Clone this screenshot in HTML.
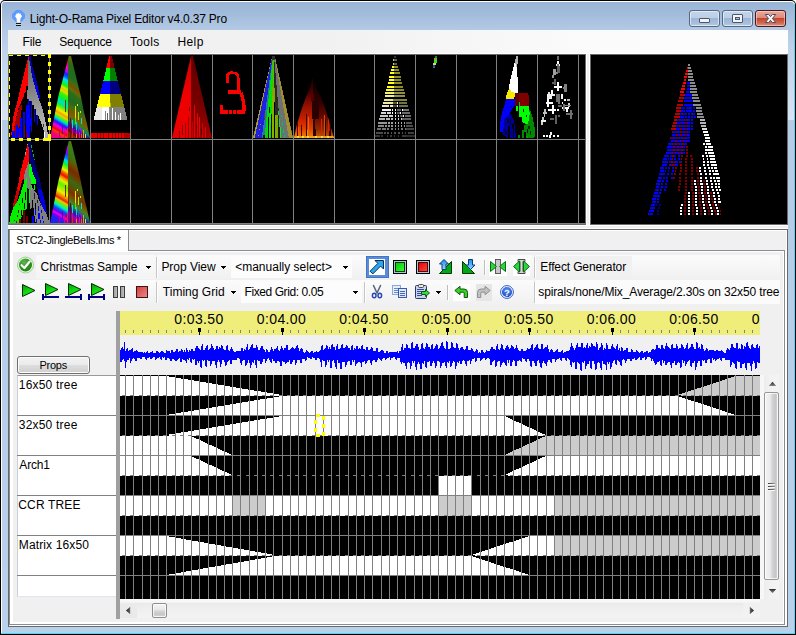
<!DOCTYPE html><html><head><meta charset="utf-8"><title>Light-O-Rama Pixel Editor v4.0.37 Pro</title><style>

*{box-sizing:border-box;margin:0;padding:0}
html,body{width:796px;height:635px;overflow:hidden;background:#fff}
body{font-family:"Liberation Sans",sans-serif;font-size:12px;color:#000;position:relative}
.a{position:absolute}
.t{position:absolute;white-space:nowrap;line-height:1}
#win{position:absolute;left:0;top:0;width:796px;height:635px;background:#000;border-radius:5px 5px 0 0;overflow:hidden}
#fr1{position:absolute;left:1px;top:1px;width:794px;height:633px;background:#fff;border-radius:4px 4px 0 0}
#fr2{position:absolute;left:2px;top:2px;width:792px;height:631px;border-radius:3px 3px 0 0;
 background:linear-gradient(#99b4d5 0px,#a3bcdb 12px,#b2c9e4 27px,#bfd3eb 50px,#d7e4f4 118px,#b5cce7 118.5px,#b9d1ea 100%)}

</style></head><body>
<div id="win"><div id="fr1"></div><div id="fr2"></div>
<div class="a" style="left:794px;top:4px;width:1px;height:630px;background:#4fd8f4"></div>
<div class="a" style="left:1px;top:633px;width:794px;height:1px;background:#4fd8f4"></div>
<div class="a" style="left:1px;top:8px;width:1px;height:625px;background:#fff"></div>
<div class="t" style="left:29.80px;top:13px;font-size:12px;letter-spacing:-0.189px;">Light-O-Rama Pixel Editor v4.0.37 Pro</div>
<svg class="a" style="left:11px;top:9px" width="16" height="18" viewBox="11 9 16 18">
<polygon points="16,10 21,10 25,14 25,18 21,22.3 16,22.3 12,18 12,14" fill="#5f9bff"/>
<path d="M18.5 12.4 L19.3 13.8 L20.8 13.6 L20.9 15 L22.2 16 L21 17.4 L20.3 19 L20.2 22.4 L16.8 22.4 L16.7 19 L16 17.4 L14.8 16 L16.1 15 L16.2 13.6 L17.7 13.8 Z" fill="#fff"/>
<rect x="16" y="23" width="5" height="1" fill="#1a1a1a"/><rect x="16" y="25" width="5" height="1" fill="#1a1a1a"/>
<rect x="16" y="24" width="5" height="1" fill="#c8d4e4"/>
</svg>
<div class="a" style="left:689px;top:10px;width:31px;height:17px;border:1px solid #566683;border-radius:3px;background:linear-gradient(#c3d4ea 0,#bccfe7 45%,#9cb6d6 50%,#a9c1de 85%,#b9cee7 100%);box-shadow:inset 0 0 0 1px rgba(235,243,252,.7)"></div>
<div class="a" style="left:699px;top:18px;width:11px;height:5px;border:1px solid #4a5670;border-radius:1px;background:#f4f4f4"></div>
<div class="a" style="left:722px;top:10px;width:31px;height:17px;border:1px solid #566683;border-radius:3px;background:linear-gradient(#c3d4ea 0,#bccfe7 45%,#9cb6d6 50%,#a9c1de 85%,#b9cee7 100%);box-shadow:inset 0 0 0 1px rgba(235,243,252,.7)"></div>
<div class="a" style="left:732px;top:14px;width:11px;height:9px;border:1px solid #4a5670;border-radius:1px;background:#f4f4f4"></div>
<div class="a" style="left:735px;top:17px;width:5px;height:3px;border:1px solid #4a5670;background:#a9c4e3"></div>
<div class="a" style="left:755px;top:10px;width:31px;height:17px;border:1px solid #4a1622;border-radius:3px;background:linear-gradient(#e9aa9c 0,#dd8a7a 45%,#c4442a 50%,#cf6a52 80%,#dc9580 100%);box-shadow:inset 0 0 0 1px rgba(255,220,210,.55)"></div>
<svg class="a" style="left:764px;top:13px" width="13" height="11" viewBox="0 0 13 11"><path d="M1.3 1.5 L4.6 1.5 L6.5 3.7 L8.4 1.5 L11.7 1.5 L8.4 5.5 L11.7 9.5 L8.4 9.5 L6.5 7.3 L4.6 9.5 L1.3 9.5 L4.6 5.5 Z" fill="#fbfbfb" stroke="#464e66" stroke-width="1" stroke-linejoin="round"/></svg>
<div class="a" style="left:8px;top:30px;width:780px;height:597px;background:#f0f0f0"></div>
<div class="a" style="left:8px;top:30px;width:780px;height:24px;background:linear-gradient(90deg,#f0f0f0 0,#f1f1f1 40%,#fbfbfb 75%,#fdfdfd 100%)"></div>
<div class="t" style="left:22.40px;top:36px;font-size:12px;letter-spacing:-0.067px;">File</div>
<div class="t" style="left:59.20px;top:36px;font-size:12px;letter-spacing:-0.186px;">Sequence</div>
<div class="t" style="left:130.10px;top:36px;font-size:12px;letter-spacing:0.275px;">Tools</div>
<div class="t" style="left:177.40px;top:36px;font-size:12px;letter-spacing:0.433px;">Help</div>
<div class="a" style="left:8px;top:53px;width:780px;height:1px;background:#fff"></div>
<div class="a" style="left:8px;top:225px;width:780px;height:1px;background:#fff"></div>
<div class="a" style="left:8px;top:228px;width:780px;height:1px;background:#fff"></div>
<div class="a" style="left:586px;top:53px;width:1px;height:173px;background:#fff"></div>
<div class="a" style="left:589px;top:53px;width:1px;height:173px;background:#fff"></div>
<div class="a" style="left:8px;top:54px;width:578px;height:171px;background:#000;border-left:1px solid #6a6a6a;border-top:1px solid #6a6a6a" id="thumbs"></div>
<svg class="a" style="left:8px;top:54px" width="578" height="172" viewBox="8 54 578 172" shape-rendering="crispEdges" id="thsvg">
<defs>
<linearGradient id="rb1" gradientUnits="userSpaceOnUse" x1="64.5" y1="56" x2="27.44" y2="117.76"><stop offset="0.000" stop-color="#c03000"/><stop offset="0.024" stop-color="#ff0000"/><stop offset="0.071" stop-color="#ff0060"/><stop offset="0.119" stop-color="#ff00e0"/><stop offset="0.167" stop-color="#c000ff"/><stop offset="0.202" stop-color="#2020ff"/><stop offset="0.238" stop-color="#0060ff"/><stop offset="0.274" stop-color="#00e0ff"/><stop offset="0.310" stop-color="#00f080"/><stop offset="0.345" stop-color="#20f000"/><stop offset="0.381" stop-color="#c0f000"/><stop offset="0.405" stop-color="#f0c000"/><stop offset="0.429" stop-color="#e0e000"/><stop offset="0.464" stop-color="#40f000"/><stop offset="0.524" stop-color="#00f040"/><stop offset="0.571" stop-color="#00e0c0"/><stop offset="0.607" stop-color="#00f060"/><stop offset="0.643" stop-color="#80f000"/><stop offset="0.679" stop-color="#f0f000"/><stop offset="0.714" stop-color="#f0a000"/><stop offset="0.738" stop-color="#f0d000"/><stop offset="0.762" stop-color="#60f000"/><stop offset="0.786" stop-color="#00f0a0"/><stop offset="0.810" stop-color="#00a0f0"/><stop offset="0.833" stop-color="#2020f0"/><stop offset="0.857" stop-color="#8000f0"/><stop offset="0.881" stop-color="#f000f0"/><stop offset="0.905" stop-color="#f00080"/><stop offset="0.929" stop-color="#f00000"/><stop offset="0.952" stop-color="#f04000"/><stop offset="1.000" stop-color="#f00080"/></linearGradient><linearGradient id="rb1d" gradientUnits="userSpaceOnUse" x1="75" y1="56" x2="33.17" y2="108.95"><stop offset="0.000" stop-color="#6a6000"/><stop offset="0.070" stop-color="#5a6a08"/><stop offset="0.140" stop-color="#2a6a18"/><stop offset="0.279" stop-color="#1e6e1e"/><stop offset="0.349" stop-color="#4a6a10"/><stop offset="0.384" stop-color="#7a5000"/><stop offset="0.419" stop-color="#6a6a08"/><stop offset="0.465" stop-color="#2a6e18"/><stop offset="0.570" stop-color="#206a20"/><stop offset="0.628" stop-color="#4a6a10"/><stop offset="0.698" stop-color="#7a5a00"/><stop offset="0.733" stop-color="#6a6a00"/><stop offset="0.767" stop-color="#308030"/><stop offset="0.802" stop-color="#208060"/><stop offset="0.826" stop-color="#203090"/><stop offset="0.849" stop-color="#301880"/><stop offset="0.872" stop-color="#600080"/><stop offset="0.895" stop-color="#800060"/><stop offset="0.919" stop-color="#800000"/><stop offset="0.953" stop-color="#803000"/><stop offset="1.000" stop-color="#803000"/></linearGradient><linearGradient id="rb2" gradientUnits="userSpaceOnUse" x1="64.5" y1="141" x2="27.00" y2="203.50"><stop offset="0.000" stop-color="#f000a0"/><stop offset="0.035" stop-color="#ff00ff"/><stop offset="0.094" stop-color="#a000ff"/><stop offset="0.141" stop-color="#3030ff"/><stop offset="0.188" stop-color="#0080ff"/><stop offset="0.224" stop-color="#00e0e0"/><stop offset="0.259" stop-color="#00f040"/><stop offset="0.306" stop-color="#80f000"/><stop offset="0.341" stop-color="#f0f000"/><stop offset="0.376" stop-color="#f06000"/><stop offset="0.412" stop-color="#f01000"/><stop offset="0.447" stop-color="#f0a000"/><stop offset="0.482" stop-color="#e0f000"/><stop offset="0.529" stop-color="#60f000"/><stop offset="0.576" stop-color="#a0f000"/><stop offset="0.624" stop-color="#f0f000"/><stop offset="0.671" stop-color="#f08000"/><stop offset="0.706" stop-color="#f02000"/><stop offset="0.729" stop-color="#f0c000"/><stop offset="0.765" stop-color="#60f020"/><stop offset="0.800" stop-color="#00f0c0"/><stop offset="0.835" stop-color="#0060f0"/><stop offset="0.871" stop-color="#6000f0"/><stop offset="0.906" stop-color="#f000f0"/><stop offset="0.929" stop-color="#8000f0"/><stop offset="0.965" stop-color="#2020f0"/><stop offset="1.000" stop-color="#2020f0"/></linearGradient><linearGradient id="rb2d" gradientUnits="userSpaceOnUse" x1="75" y1="141" x2="33.65" y2="193.34"><stop offset="0.000" stop-color="#6a5a10"/><stop offset="0.059" stop-color="#4a7a10"/><stop offset="0.129" stop-color="#3a8010"/><stop offset="0.247" stop-color="#407010"/><stop offset="0.306" stop-color="#6a5000"/><stop offset="0.376" stop-color="#7a2800"/><stop offset="0.435" stop-color="#6a4000"/><stop offset="0.506" stop-color="#3a6a10"/><stop offset="0.576" stop-color="#5a5008"/><stop offset="0.647" stop-color="#803000"/><stop offset="0.706" stop-color="#6a5a00"/><stop offset="0.753" stop-color="#508020"/><stop offset="0.800" stop-color="#208050"/><stop offset="0.835" stop-color="#203090"/><stop offset="0.871" stop-color="#4010a0"/><stop offset="0.906" stop-color="#a000a0"/><stop offset="0.953" stop-color="#8000a0"/><stop offset="1.000" stop-color="#8000a0"/></linearGradient><clipPath id="c2"><polygon points="68.8,56 71,56 80.8,96 83.5,110 87,124 90,138 50,138 52.9,124 55.6,110 58.4,96"/></clipPath><clipPath id="c22"><polygon points="68.8,141 71,141 80.8,181 83.5,195 87,209 90,223 50,223 52.9,209 55.6,195 58.4,181"/></clipPath>
<linearGradient id="fire" x1="0" y1="0" x2="0" y2="1"><stop offset="0" stop-color="#000000"/><stop offset=".3" stop-color="#180000"/><stop offset=".45" stop-color="#500000"/><stop offset=".6" stop-color="#901000"/><stop offset=".76" stop-color="#c42000"/><stop offset=".88" stop-color="#e04000"/><stop offset=".96" stop-color="#f07000"/><stop offset="1" stop-color="#f0b020"/></linearGradient>
<linearGradient id="fired" x1="0" y1="0" x2="0" y2="1"><stop offset="0" stop-color="#000000"/><stop offset=".35" stop-color="#100000"/><stop offset=".55" stop-color="#300000"/><stop offset=".72" stop-color="#600800"/><stop offset=".88" stop-color="#902800"/><stop offset=".96" stop-color="#b05000"/><stop offset="1" stop-color="#c08010"/></linearGradient>
<linearGradient id="redl" x1="0" y1="0" x2="0" y2="1"><stop offset="0" stop-color="#d00000"/><stop offset=".5" stop-color="#f00000"/><stop offset="1" stop-color="#e80000"/></linearGradient>
<linearGradient id="redr" x1="0" y1="0" x2="0" y2="1"><stop offset="0" stop-color="#600000"/><stop offset=".6" stop-color="#780000"/><stop offset="1" stop-color="#a00000"/></linearGradient>
<linearGradient id="gry" gradientUnits="userSpaceOnUse" x1="28" y1="60" x2="46" y2="120"><stop offset="0" stop-color="#686868"/><stop offset=".5" stop-color="#848484"/><stop offset="1" stop-color="#b0b0b0"/></linearGradient>
<clipPath id="c5"><polygon points="191.0,56 193.0,56 212,138 172,138"/></clipPath>
<clipPath id="c7"><polygon points="272,56 275,56 284,96 293.2,138 252.8,138 262.3,96"/></clipPath>
<clipPath id="c8"><polygon points="312,79 314,79 316,88 320,95 325,108 330,124 334,138 294,138 296.5,126 301,111 306,97 310,88"/></clipPath>
</defs>
<polygon points="28.2,56.0 31.0,56.0 31.0,61.0 35.0,76.0 37.8,86.0 40.0,97.0 40.0,99.0 38.0,99.0 34.6,86.0 31.9,76.0 30.0,62.0 28.2,60.0" fill="#0000b8" /><polygon points="34.6,86.0 37.8,86.0 40.0,97.0 40.0,99.0 38.0,99.0" fill="#0000f0" /><polygon points="28.1,60.0 30.0,62.0 31.9,76.0 34.7,86.0 38.1,97.0 42.0,107.0 44.7,118.0 46.5,126.0 48.6,137.6 45.0,137.6 43.0,128.0 40.0,120.0 38.5,116.0 36.4,115.0 36.4,109.0 33.6,109.0 33.6,105.0 31.9,105.0 31.9,101.0 29.1,101.0 29.1,99.0 27.0,99.0 27.0,90.0 28.1,90.0" fill="url(#gry)" /><rect x="44" y="132" width="1" height="6" fill="#ffffff"/><rect x="43" y="124" width="1" height="3" fill="#303030"/><polygon points="28.2,57.0 28.9,57.0 28.9,60.0 28.1,61.0 28.1,86.0 26.0,86.0 26.0,92.0 24.8,92.0 23.6,97.0 18.9,107.0 16.1,118.0 14.2,128.0 13.3,135.0 11.1,135.0 12.0,128.0 13.1,118.0 15.9,107.0 18.4,97.0 21.1,86.0 23.6,76.0 26.1,66.0 27.6,60.0" fill="#ff0000" /><polygon points="21.6,105.0 21.6,108.0 21.1,118.0 20.2,126.0 16.1,135.0 11.9,137.6 13.3,135.0 14.4,128.0 16.1,118.0 19.3,107.0" fill="#a00000" /><rect x="28" y="99" width="1" height="6" fill="#0000ff"/><rect x="26" y="105" width="4" height="32.6" fill="#0000ff"/><rect x="31" y="101" width="1.4" height="31" fill="#0000ff"/><rect x="34" y="109" width="1" height="13" fill="#0000ff"/><rect x="36.5" y="115" width="1.2" height="10" fill="#0000ff"/><rect x="23" y="112" width="2" height="25.6" fill="#0000ff"/><rect x="20" y="118" width="2.4" height="19.6" fill="#0000ff"/><rect x="16" y="125" width="1.8" height="12.6" fill="#0000ff"/><rect x="12" y="131" width="6" height="6.6" fill="#0000ff"/><rect x="18" y="128" width="2" height="9.6" fill="#0000ff"/><rect x="30" y="118" width="1" height="8" fill="#0000ff"/><rect x="23.6" y="125" width="1.2" height="12.6" fill="#800000"/><rect x="26.8" y="132" width="1.2" height="5.6" fill="#800000"/><rect x="14.5" y="130" width="1" height="6" fill="#800000"/><rect x="21.6" y="120" width="0.8" height="8" fill="#800000"/><rect x="19" y="133" width="1" height="4.6" fill="#800000"/><rect x="25" y="118" width="1" height="12" fill="#000000"/><rect x="22.5" y="126" width="0.8" height="8" fill="#000000"/><rect x="29.8" y="110" width="0.8" height="8" fill="#000000"/>
<g clip-path="url(#c2)"><rect x="50" y="55" width="18.4" height="84" fill="url(#rb1)"/><rect x="68.4" y="55" width="22" height="84" fill="url(#rb1d)"/><rect x="65" y="100" width="1.2" height="12" fill="#703000"/><rect x="68" y="110" width="1.2" height="10" fill="#802000"/><rect x="70" y="118" width="1.2" height="20" fill="#601010"/><rect x="72" y="120" width="1.2" height="18" fill="#00e0f0"/><rect x="72" y="128" width="1.2" height="10" fill="#c000e0"/><rect x="72" y="133" width="1.2" height="5" fill="#f02000"/><rect x="75" y="106" width="1.2" height="12" fill="#f0e000"/><rect x="75" y="118" width="1.2" height="6" fill="#40f000"/><rect x="76" y="122" width="1.2" height="8" fill="#00d0f0"/><rect x="76" y="130" width="1.2" height="4" fill="#e000e0"/><rect x="76" y="134" width="1.2" height="4" fill="#f08000"/><rect x="78" y="112" width="1.2" height="8" fill="#a0f000"/><rect x="78" y="126" width="1.2" height="6" fill="#4040f0"/><rect x="79" y="132" width="1.2" height="6" fill="#f000c0"/><rect x="81" y="118" width="1.2" height="6" fill="#00e0e0"/><rect x="81" y="128" width="1.2" height="6" fill="#c000f0"/><rect x="81" y="134" width="1.2" height="4" fill="#f06000"/><rect x="83" y="130" width="1.2" height="8" fill="#f0a000"/><rect x="85" y="134" width="1.2" height="4" fill="#f0e000"/><rect x="62" y="126" width="1.2" height="8" fill="#6000a0"/><rect x="64" y="130" width="1.2" height="8" fill="#f00060"/><rect x="67" y="128" width="1.2" height="10" fill="#f02020"/><rect x="59" y="132" width="1.2" height="6" fill="#c00080"/><rect x="77" y="104" width="1" height="1.5" fill="#f0e000"/><rect x="80" y="111" width="1" height="1.5" fill="#f0e000"/></g>
<polygon points="109.3,56.0 109.5,56.0 109.5,67.5 106.5,67.5" fill="#ff0000" /><polygon points="109.5,56.0 111.7,56.0 114.5,67.5 109.5,67.5" fill="#800000" /><polygon points="106.5,67.5 109.5,67.5 109.5,80.5 103.3,80.5" fill="#00ff00" /><polygon points="109.5,67.5 114.5,67.5 117.7,80.5 109.5,80.5" fill="#008000" /><polygon points="103.3,80.5 109.5,80.5 109.5,93.5 100.1,93.5" fill="#0000ff" /><polygon points="109.5,80.5 117.7,80.5 120.9,93.5 109.5,93.5" fill="#000080" /><polygon points="100.1,93.5 109.5,93.5 109.5,106.5 96.9,106.5" fill="#ffff00" /><polygon points="109.5,93.5 120.9,93.5 124.1,106.5 109.5,106.5" fill="#808000" /><polygon points="96.9,106.5 109.5,106.5 109.5,120.0 93.6,120.0" fill="#ffffff" /><polygon points="109.5,106.5 124.1,106.5 127.4,120.0 109.5,120.0" fill="#808080" /><rect x="104.5" y="111" width="1" height="9" fill="#808080"/><rect x="106.5" y="113" width="1" height="7" fill="#606060"/><rect x="108.5" y="107" width="1" height="13" fill="#909090"/><rect x="111.5" y="108" width="1" height="12" fill="#ffffff"/><rect x="114.5" y="112" width="1" height="8" fill="#ffffff"/><rect x="117.5" y="115" width="1" height="5" fill="#e0e0e0"/><rect x="119.5" y="113" width="1" height="7" fill="#ffffff"/><rect x="109.5" y="103" width="1" height="4" fill="#c0c000"/><polygon points="96.9,106.5 102.5,106.5 101.5,120.0 93.6,120.0" fill="#e8e8e8" /><rect x="91" y="133" width="40" height="5" fill="#e80000"/><rect x="97" y="133" width="1" height="5" fill="#900000"/><rect x="100" y="133" width="1" height="5" fill="#900000"/><rect x="103" y="133" width="1" height="5" fill="#900000"/><rect x="108" y="133" width="1" height="5" fill="#900000"/><rect x="112" y="133" width="1" height="5" fill="#900000"/><rect x="115" y="133" width="1" height="5" fill="#900000"/><rect x="118" y="133" width="1" height="5" fill="#900000"/><rect x="121" y="133" width="1" height="5" fill="#900000"/><rect x="124" y="133" width="1" height="5" fill="#900000"/><rect x="124" y="133" width="7" height="5" fill="#b00000"/>
<g clip-path="url(#c5)"><rect x="172" y="55" width="19" height="84" fill="url(#redl)"/><rect x="191" y="55" width="21" height="84" fill="url(#redr)"/><rect x="194" y="105" width="1" height="33" fill="#e80000"/><rect x="197" y="113" width="1" height="25" fill="#e00000"/><rect x="199" y="117" width="1" height="20" fill="#f00000"/><rect x="202" y="123" width="1" height="15" fill="#d00000"/><rect x="205" y="127" width="1" height="11" fill="#e00000"/><rect x="192" y="121" width="1" height="17" fill="#c00000"/><rect x="188" y="117" width="1" height="21" fill="#900000"/><rect x="185" y="123" width="1" height="15" fill="#a00000"/><rect x="182" y="125" width="1" height="10" fill="#800000"/><rect x="179" y="131" width="1" height="7" fill="#900000"/><rect x="196" y="125" width="1" height="8" fill="#600000"/><rect x="201" y="129" width="1" height="6" fill="#500000"/><rect x="189" y="107" width="1" height="4" fill="#800000"/></g>
<g transform="translate(0,0)" fill="none" stroke="#ff0000"><path d="M227.2 82.5 V77 Q227.4 72.6 232 72.6 Q238.4 72.6 238.4 79 V90" stroke-width="2.6"/><path d="M228 91.7 H241" stroke-width="3.6"/><path d="M241 93 Q243 98 243.6 103 Q244.3 108 244.2 111" stroke-width="3.4"/><path d="M221.2 104.5 V110" stroke-width="3.2"/><path d="M219.6 112 H245.4" stroke-width="4.6" stroke-dasharray="8.5 1 3 1 3 1 30"/></g>
<g clip-path="url(#c7)"><polygon points="272.2,56.0 272.3,56.0 254.6,138.0 252.8,138.0" fill="#b0a020" /><polygon points="272.3,56.0 272.8,56.0 261.7,138.0 254.6,138.0" fill="#2020e0" /><polygon points="272.8,56.0 273.0,56.0 264.5,138.0 261.7,138.0" fill="#2080a0" /><polygon points="273.0,56.0 273.4,56.0 271.0,138.0 264.5,138.0" fill="#00e000" /><polygon points="273.4,56.0 273.7,56.0 275.8,138.0 271.0,138.0" fill="#80a800" /><polygon points="273.7,56.0 274.0,56.0 281.1,138.0 275.8,138.0" fill="#2a2a2a" /><polygon points="274.0,56.0 274.5,56.0 288.8,138.0 281.1,138.0" fill="#707070" /><polygon points="274.5,56.0 274.8,56.0 293.2,138.0 288.8,138.0" fill="#a09030" /><rect x="269.018" y="107.088" width="1.0395" height="5.54401" fill="#000"/><rect x="271.097" y="114.018" width="0.831601" height="24.255" fill="#000"/><rect x="267.632" y="116.79" width="1.2474" height="21.483" fill="#000"/><rect x="270.058" y="112.632" width="1.0395" height="12.474" fill="#00ff00"/><rect x="268.879" y="125.106" width="1.1781" height="13.167" fill="#00ff00"/><rect x="273.869" y="101.544" width="1.386" height="22.176" fill="#000"/><rect x="274.216" y="123.72" width="1.7325" height="14.553" fill="#000"/><rect x="275.255" y="115.404" width="2.4255" height="22.869" fill="#80a800"/><rect x="272.137" y="96" width="1.7325" height="42.273" fill="#88b000"/><rect x="278.027" y="110.9" width="1.0395" height="3.8115" fill="#00e040"/><rect x="279.067" y="118.869" width="1.0395" height="8.31601" fill="#00e040"/><rect x="280.106" y="127.185" width="1.386" height="11.088" fill="#00f020"/><rect x="278.374" y="127.185" width="1.7325" height="11.088" fill="#181818"/><rect x="280.799" y="114.711" width="1.0395" height="2.772" fill="#00c060"/><rect x="281.839" y="121.641" width="1.0395" height="4.851" fill="#00c060"/><rect x="282.878" y="128.571" width="1.2474" height="4.851" fill="#00c060"/><rect x="284.125" y="134.808" width="0.970201" height="3.465" fill="#00c060"/><rect x="283.918" y="119.909" width="1.0395" height="1.7325" fill="#2090c0"/><rect x="284.957" y="126.839" width="1.0395" height="1.386" fill="#2090c0"/><rect x="285.997" y="132.036" width="1.0395" height="2.4255" fill="#2090c0"/><rect x="263.128" y="134.808" width="1.7325" height="3.465" fill="#301010"/><rect x="265.207" y="128.571" width="1.7325" height="9.70201" fill="#20c020"/><rect x="265.9" y="116.79" width="1.386" height="11.781" fill="#20c020"/><rect x="263.821" y="112.632" width="1.386" height="6.93001" fill="#504040"/><rect x="259.663" y="123.72" width="1.0395" height="1.0395" fill="#b09040"/><rect x="258.97" y="128.918" width="1.0395" height="1.0395" fill="#b09040"/><rect x="257.93" y="134.808" width="1.0395" height="1.386" fill="#b09040"/><rect x="272" y="56" width="3" height="3.5" fill="#303030"/></g>
<g clip-path="url(#c8)"><rect x="294" y="55" width="19" height="84" fill="url(#fire)"/><rect x="313" y="55" width="21" height="84" fill="url(#fired)"/><rect x="324" y="116" width="1" height="23" fill="#f04000"/><rect x="325" y="119" width="1" height="20" fill="#200000"/><rect x="308" y="128" width="1" height="11" fill="#f04000"/><rect x="328" y="118" width="1" height="21" fill="#e02000"/><rect x="307" y="130" width="1" height="9" fill="#f09000"/><rect x="315" y="129" width="1" height="10" fill="#300000"/><rect x="330" y="113" width="1" height="26" fill="#300000"/><rect x="321" y="119" width="1" height="20" fill="#e02000"/><rect x="306" y="114" width="1" height="25" fill="#300000"/><rect x="329" y="131" width="1" height="8" fill="#300000"/><rect x="298" y="127" width="1" height="12" fill="#f06000"/><rect x="297" y="119" width="1" height="20" fill="#500000"/><rect x="324" y="115" width="1" height="24" fill="#f04000"/><rect x="308" y="117" width="1" height="22" fill="#f06000"/><rect x="314" y="118" width="1" height="21" fill="#300000"/><rect x="301" y="119" width="1" height="20" fill="#e02000"/><rect x="313" y="120" width="1" height="19" fill="#200000"/><rect x="301" y="125" width="1" height="14" fill="#500000"/><rect x="312" y="100" width="7" height="19" fill="#2a0000"/><rect x="311" y="95" width="3" height="6" fill="#500000"/><rect x="294" y="136" width="40" height="2" fill="#f0a020"/><rect x="297" y="136" width="2" height="2" fill="#f0e040"/><rect x="302" y="136" width="2" height="2" fill="#f0e040"/><rect x="307" y="136" width="2" height="2" fill="#f0e040"/><rect x="315" y="136" width="2" height="2" fill="#f0e040"/><rect x="321" y="136" width="2" height="2" fill="#f0e040"/><rect x="327" y="136" width="2" height="2" fill="#f0e040"/></g>
<rect x="394" y="56" width="2" height="2" fill="#303050"/><rect x="393" y="59" width="1" height="2" fill="#c8c840"/><rect x="394" y="59" width="3" height="2" fill="#606040"/><rect x="393" y="63" width="1" height="2" fill="#c8c840"/><rect x="394" y="63" width="3" height="2" fill="#606040"/><rect x="392" y="66" width="2" height="2" fill="#ffff20"/><rect x="394" y="66" width="4" height="2" fill="#8c8c20"/><rect x="391" y="69" width="3" height="2" fill="#ffff20"/><rect x="394" y="69" width="5" height="2" fill="#8c8c20"/><rect x="390" y="72" width="4" height="2" fill="#ffff20"/><rect x="394" y="72" width="6" height="2" fill="#8c8c20"/><rect x="389" y="76" width="5" height="2" fill="#ffff20"/><rect x="394" y="76" width="7" height="2" fill="#8c8c20"/><rect x="389" y="79" width="5" height="2" fill="#ffff20"/><rect x="394" y="79" width="7" height="2" fill="#8c8c20"/><rect x="388" y="82" width="6" height="2" fill="#ffff20"/><rect x="394" y="82" width="8" height="2" fill="#8c8c20"/><rect x="387" y="86" width="7" height="2" fill="#ffff20"/><rect x="394" y="86" width="9" height="2" fill="#8c8c20"/><rect x="386" y="89" width="8" height="2" fill="#ffff20"/><rect x="394" y="89" width="10" height="2" fill="#8c8c20"/><rect x="385" y="92" width="9" height="2" fill="#f0f080"/><rect x="394" y="92" width="11" height="2" fill="#909048"/><rect x="385" y="95" width="9" height="2" fill="#f0f080"/><rect x="394" y="95" width="11" height="2" fill="#909048"/><rect x="384" y="99" width="9" height="2" fill="#e4e490"/><rect x="393" y="99" width="14" height="2" fill="#84843c"/><rect x="383" y="102" width="10" height="2" fill="#ececa0"/><rect x="393" y="102" width="4" height="2" fill="#585838"/><rect x="397" y="102" width="1" height="2" fill="#ffffd0"/><rect x="399" y="102" width="8" height="2" fill="#747440"/><rect x="382" y="105" width="7" height="2" fill="#e4e4c4"/><rect x="390" y="105" width="3" height="2" fill="#f0f0a0"/><rect x="393" y="105" width="4" height="2" fill="#484838"/><rect x="397" y="105" width="1" height="2" fill="#ffffe0"/><rect x="399" y="105" width="9" height="2" fill="#6c6c50"/><rect x="382" y="109" width="9" height="2" fill="#f4f4f4"/><rect x="392" y="109" width="1" height="2" fill="#ffffff"/><rect x="395" y="109" width="1" height="2" fill="#ffffff"/><rect x="397" y="109" width="4" height="2" fill="#606060"/><rect x="402" y="109" width="1" height="2" fill="#ffffff"/><rect x="403" y="109" width="6" height="2" fill="#747474"/><rect x="381" y="112" width="5" height="2" fill="#d4d4d4"/><rect x="387" y="112" width="4" height="2" fill="#d8d8d8"/><rect x="392" y="112" width="1" height="2" fill="#ffffff"/><rect x="395" y="112" width="1" height="2" fill="#f0f0f0"/><rect x="397" y="112" width="3" height="2" fill="#585858"/><rect x="400" y="112" width="1" height="2" fill="#ffffff"/><rect x="402" y="112" width="8" height="2" fill="#6c6c6c"/><rect x="380" y="115" width="8" height="2" fill="#c8c8c8"/><rect x="389" y="115" width="4" height="2" fill="#d0d0d0"/><rect x="395" y="115" width="1" height="2" fill="#e0e0e0"/><rect x="398" y="115" width="1" height="2" fill="#e0e0e0"/><rect x="400" y="115" width="3" height="2" fill="#585858"/><rect x="403" y="115" width="1" height="2" fill="#f0f0f0"/><rect x="405" y="115" width="6" height="2" fill="#686868"/><rect x="379" y="118" width="6" height="2" fill="#b4b4b4"/><rect x="386" y="118" width="4" height="2" fill="#b8b8b8"/><rect x="391" y="118" width="2" height="2" fill="#c0c0c0"/><rect x="395" y="118" width="1" height="2" fill="#d0d0d0"/><rect x="398" y="118" width="1" height="2" fill="#d0d0d0"/><rect x="401" y="118" width="1" height="2" fill="#d0d0d0"/><rect x="402" y="118" width="9" height="2" fill="#606060"/><rect x="378" y="122" width="9" height="2" fill="#949494"/><rect x="388" y="122" width="2" height="2" fill="#a0a0a0"/><rect x="391" y="122" width="2" height="2" fill="#a0a0a0"/><rect x="395" y="122" width="1" height="2" fill="#b0b0b0"/><rect x="398" y="122" width="1" height="2" fill="#b0b0b0"/><rect x="401" y="122" width="1" height="2" fill="#b0b0b0"/><rect x="404" y="122" width="1" height="2" fill="#a0a0a0"/><rect x="406" y="122" width="6" height="2" fill="#545454"/><rect x="378" y="125" width="6" height="2" fill="#848484"/><rect x="385" y="125" width="2" height="2" fill="#8c8c8c"/><rect x="388" y="125" width="2" height="2" fill="#909090"/><rect x="391" y="125" width="2" height="2" fill="#909090"/><rect x="395" y="125" width="1" height="2" fill="#989898"/><rect x="398" y="125" width="1" height="2" fill="#989898"/><rect x="401" y="125" width="1" height="2" fill="#989898"/><rect x="404" y="125" width="1" height="2" fill="#909090"/><rect x="406" y="125" width="7" height="2" fill="#4c4c4c"/><rect x="377" y="128" width="4" height="2" fill="#707070"/><rect x="382" y="128" width="4" height="2" fill="#747474"/><rect x="387" y="128" width="2" height="2" fill="#787878"/><rect x="391" y="128" width="2" height="2" fill="#7c7c7c"/><rect x="395" y="128" width="1" height="2" fill="#808080"/><rect x="398" y="128" width="1" height="2" fill="#808080"/><rect x="401" y="128" width="2" height="2" fill="#787878"/><rect x="405" y="128" width="1" height="2" fill="#707070"/><rect x="406" y="128" width="8" height="2" fill="#444444"/><rect x="376" y="132" width="7" height="2" fill="#4c4c4c"/><rect x="384" y="132" width="2" height="2" fill="#505050"/><rect x="387" y="132" width="2" height="2" fill="#505050"/><rect x="391" y="132" width="1" height="2" fill="#545454"/><rect x="394" y="132" width="2" height="2" fill="#545454"/><rect x="398" y="132" width="2" height="2" fill="#505050"/><rect x="402" y="132" width="1" height="2" fill="#505050"/><rect x="405" y="132" width="1" height="2" fill="#4c4c4c"/><rect x="408" y="132" width="1" height="2" fill="#484848"/><rect x="409" y="132" width="5" height="2" fill="#3c3c3c"/><rect x="375" y="135" width="5" height="2" fill="#343434"/><rect x="381" y="135" width="2" height="2" fill="#303030"/><rect x="387" y="135" width="1" height="2" fill="#383838"/><rect x="390" y="135" width="2" height="2" fill="#383838"/><rect x="394" y="135" width="1" height="2" fill="#383838"/><rect x="398" y="135" width="1" height="2" fill="#343434"/><rect x="402" y="135" width="4" height="2" fill="#383838"/><rect x="406" y="135" width="9" height="2" fill="#2c2c2c"/>
<rect x="435" y="56" width="2" height="2" fill="#208020"/><rect x="434" y="58" width="3" height="2" fill="#a0a020"/><rect x="434" y="60" width="3" height="3" fill="#30e030"/><rect x="433" y="63" width="3" height="2" fill="#e0e020"/><rect x="433" y="65" width="2" height="2" fill="#2040e0"/><rect x="433" y="67" width="2" height="1" fill="#2080a0"/>
<polygon points="516.1,56.1 517.9,56.1 517.9,63.0 516.5,67.9 517.2,74.8 518.0,81.7 518.0,92.8 515.1,92.8 510.9,91.8 508.9,88.7 509.9,81.7 511.6,74.8 513.4,67.9 515.1,60.9" fill="#ffffff" /><polygon points="516.1,56.1 517.9,56.1 517.9,63.0 516.6,67.2 515.5,64.4 515.1,60.9" fill="#b0b0b0" /><polygon points="509.6,88.7 511.3,91.8 515.1,92.8 515.1,96.0 513.7,98.8 508.9,99.5 506.1,99.5 506.1,96.0 507.1,92.8" fill="#f8e800" /><polygon points="515.1,92.9 527.2,92.9 529.0,96.0 529.0,105.7 515.1,105.7" fill="#800000" /><rect x="515.097" y="92.8815" width="3.465" height="12.8205" fill="#600000"/><polygon points="506.1,99.5 515.1,98.8 515.1,105.7 513.7,106.4 511.6,109.9 509.9,113.3 507.5,116.8 504.0,118.9 504.0,132.0 500.2,132.0 500.2,122.3 501.2,116.8 501.9,113.3 503.0,109.9 504.0,106.4 505.0,102.9" fill="#0000f8" /><polygon points="509.9,113.3 511.6,115.4 513.7,120.3 515.1,127.2 515.8,137.6 506.8,137.6 501.9,133.4 504.0,132.0 504.0,118.9 507.5,116.8" fill="#000098" /><polygon points="518.6,105.7 529.0,105.7 529.7,113.3 529.0,118.9 527.6,123.7 525.5,123.7 521.7,121.6 521.7,116.8 518.9,116.8" fill="#00ff00" /><rect x="515.79" y="106.049" width="2.079" height="4.851" fill="#00ff00"/><rect x="518.909" y="101.891" width="1.0395" height="3.8115" fill="#00d000"/><polygon points="529.0,109.9 530.3,109.9 532.4,116.8 533.8,123.7 535.5,130.7 535.2,136.2 533.8,137.6 526.2,137.6 524.1,130.7 524.1,125.1 527.6,123.7 529.0,118.9 529.7,113.3" fill="#008800" /><rect x="522.027" y="129.957" width="2.079" height="7.62301" fill="#008800"/><rect x="518.216" y="134.808" width="1.7325" height="2.772" fill="#008800"/><rect x="525.492" y="135.501" width="2.079" height="2.079" fill="#00a000"/><rect x="522.72" y="109.167" width="1.386" height="2.772" fill="#002000"/><rect x="525.839" y="114.711" width="1.386" height="2.079" fill="#002000"/><rect x="528.264" y="126.492" width="1.386" height="2.079" fill="#002000"/><rect x="529.65" y="131.343" width="1.386" height="3.465" fill="#002000"/><rect x="526.532" y="128.571" width="1.386" height="4.851" fill="#000000"/><rect x="524.799" y="132.036" width="1.386" height="5.54401" fill="#000000"/><rect x="510.593" y="105.702" width="1.386" height="1.386" fill="#000040"/><rect x="507.128" y="118.869" width="1.386" height="4.158" fill="#000030"/><rect x="509.9" y="119.562" width="1.386" height="5.54401" fill="#000020"/><rect x="505.049" y="123.72" width="1.0395" height="1.386" fill="#000030"/><rect x="503.316" y="128.571" width="1.386" height="2.079" fill="#000030"/><rect x="508.167" y="126.492" width="1.7325" height="11.088" fill="#000010"/><rect x="512.325" y="123.72" width="1.386" height="4.851" fill="#000010"/><rect x="505.395" y="130.65" width="1.386" height="4.158" fill="#000020"/><rect x="513.365" y="129.264" width="1.0395" height="8.31601" fill="#000020"/>
<rect x="557.1" y="56.1" width="1.7" height="3.5" fill="#707070"/><rect x="557.1" y="60.9" width="1.7" height="3.1" fill="#ffffff"/><rect x="556.1" y="64" width="3.8" height="2.1" fill="#e8e8e8"/><rect x="557.1" y="64.4" width="1.7" height="1.4" fill="#707070"/><rect x="557.1" y="66.1" width="2.8" height="6.6" fill="#606060"/><rect x="553.3" y="68.9" width="2.8" height="5.9" fill="#a0a0a0"/><rect x="556.1" y="71.7" width="2.1" height="2.1" fill="#808080"/><rect x="551.9" y="74.8" width="2.1" height="3.1" fill="#909090"/><rect x="553.7" y="79.3" width="2.4" height="5.9" fill="#606060"/><rect x="551.9" y="81.7" width="4.2" height="2.1" fill="#606060"/><rect x="556.8" y="82.1" width="2.4" height="8.7" fill="#ffffff"/><rect x="553.7" y="85.9" width="8.3" height="2.4" fill="#ffffff"/><rect x="564.4" y="84.1" width="2.1" height="7.6" fill="#808080"/><rect x="563" y="86.9" width="3.5" height="1.7" fill="#808080"/><rect x="550.9" y="90" width="2.1" height="6.2" fill="#ffffff"/><rect x="547.4" y="93.8" width="7.3" height="2.4" fill="#f0f0f0"/><rect x="548.1" y="92.1" width="1.7" height="2.1" fill="#e0e0e0"/><rect x="556.1" y="94.2" width="3.8" height="2.1" fill="#707070"/><rect x="560.9" y="95.2" width="1.7" height="1" fill="#f0f0f0"/><rect x="547.4" y="93.9" width="4.9" height="4.9" fill="#f0f0f0"/><rect x="556.1" y="93.9" width="3.8" height="7.6" fill="#707070"/><rect x="558.2" y="101.5" width="2.1" height="2.1" fill="#707070"/><rect x="560.9" y="93.9" width="1.7" height="4.9" fill="#f0f0f0"/><rect x="563.7" y="99.1" width="2.1" height="2.1" fill="#ffffff"/><rect x="566.8" y="99.1" width="3.1" height="2.1" fill="#c0c0c0"/><rect x="561.6" y="101.5" width="1.7" height="2.1" fill="#ffffff"/><rect x="567.9" y="102.9" width="2.1" height="4.2" fill="#d0d0d0"/><rect x="562" y="107.1" width="1.7" height="2.1" fill="#ffffff"/><rect x="565.1" y="107.1" width="3.5" height="2.1" fill="#ffffff"/><rect x="566.1" y="109.2" width="1.7" height="2.8" fill="#ffffff"/><rect x="563" y="103.6" width="2.1" height="7.3" fill="#707070"/><rect x="563.7" y="105" width="6.9" height="1.4" fill="#808080"/><rect x="547.4" y="98.8" width="1.7" height="8" fill="#ffffff"/><rect x="546" y="101.9" width="6.9" height="2.1" fill="#ffffff"/><rect x="551.9" y="105.4" width="2.2" height="8.3" fill="#ffffff"/><rect x="548.1" y="108.8" width="8" height="2.1" fill="#ffffff"/><rect x="557.1" y="109.2" width="1.7" height="1.7" fill="#ffffff"/><rect x="558.2" y="105" width="3.5" height="1.7" fill="#606060"/><rect x="570" y="110.2" width="2.1" height="8.7" fill="#707070"/><rect x="566.1" y="113" width="6.6" height="2.1" fill="#707070"/><rect x="544" y="109.2" width="1.7" height="3.5" fill="#c0c0c0"/><rect x="543.3" y="112.3" width="3.5" height="1.7" fill="#c0c0c0"/><rect x="544" y="114" width="1" height="2.8" fill="#c0c0c0"/><rect x="542.2" y="116.8" width="1.7" height="3.8" fill="#c8c8c8"/><rect x="541.2" y="120.3" width="4.5" height="1.7" fill="#f0f0f0"/><rect x="541.2" y="122" width="1.7" height="2.8" fill="#d0d0d0"/><rect x="550.2" y="118.2" width="3.5" height="1.7" fill="#606060"/><rect x="555.1" y="115.1" width="1.7" height="8.7" fill="#606060"/><rect x="558.2" y="115.4" width="1.7" height="1.4" fill="#606060"/><rect x="542.9" y="134.8" width="2.1" height="2.1" fill="#ffffff"/><rect x="546" y="134.8" width="1.7" height="2.1" fill="#ffffff"/><rect x="549.2" y="134.8" width="1.7" height="3.1" fill="#ffffff"/><rect x="550.2" y="132" width="1.7" height="2.8" fill="#f0f0f0"/><rect x="553.3" y="134.8" width="1.7" height="2.1" fill="#ffffff"/><rect x="557.1" y="134.8" width="1.7" height="2.1" fill="#ffffff"/>
<polygon points="28.1,141.1 30.9,141.1 32.3,151.9 35.7,165.7 39.9,179.6 39.9,180.0 42.0,190.4 44.7,200.8 46.1,207.7 46.8,212.6 44.0,212.6 42.7,207.7 39.9,200.8 37.8,190.4 35.7,180.0 35.0,179.6 30.2,165.7 28.8,151.9" fill="#000078" /><polygon points="37.8,188.3 42.0,190.4 44.7,200.8 46.1,207.7 46.8,212.6 44.0,212.6 42.7,207.7 39.9,200.8" fill="#0000e0" /><polygon points="27.1,144.2 28.1,144.2 29.1,151.9 29.1,161.6 28.1,165.7 25.3,172.7 23.2,179.6 22.2,180.0 19.8,190.4 17.0,200.8 14.9,208.4 13.2,208.4 13.2,204.3 14.9,197.3 17.0,189.0 19.1,180.0 19.1,179.6 20.1,172.7 22.2,165.7 23.9,158.8 26.0,151.9" fill="#ff0000" /><polygon points="17.0,189.0 19.8,190.4 17.0,200.8 14.9,208.4 13.2,208.4 13.2,204.3 14.9,197.3" fill="#c80000" /><polygon points="28.1,161.6 29.1,161.6 29.1,165.7 29.5,172.7 30.9,179.6 30.9,180.0 31.6,186.9 37.1,193.9 39.2,200.8 42.7,207.7 46.8,214.7 49.6,223.0 35.7,223.0 34.3,214.7 34.3,207.7 31.6,207.7 30.2,209.1 30.2,193.9 28.8,189.7 27.1,186.9 26.7,180.0 23.9,179.6 24.6,172.7 27.4,165.7" fill="#808080" /><polygon points="29.1,164.0 30.9,164.0 32.6,172.7 35.7,179.6 35.7,180.0 35.7,184.2 30.9,184.2 30.9,180.0 30.9,179.6 29.5,176.8 29.1,172.7" fill="#00ff00" /><polygon points="23.9,180.0 26.7,180.0 27.1,193.9 27.1,207.7 22.9,214.7 19.1,221.6 19.1,223.0 9.4,223.0 10.8,214.7 13.2,207.7 17.7,200.8 20.5,193.9 21.9,189.0 23.6,184.2" fill="#00f000" /><rect x="25.6715" y="177.848" width="1.386" height="4.158" fill="#00ff00"/><rect x="28.79" y="189.702" width="1.386" height="13.167" fill="#00ff00"/><rect x="30.869" y="184.851" width="1.386" height="4.851" fill="#00ff00"/><rect x="33.9875" y="184.851" width="1.0395" height="4.851" fill="#00ff00"/><rect x="24.9785" y="191.781" width="1.1781" height="8.31601" fill="#000"/><rect x="22.2065" y="198.018" width="0.693001" height="4.851" fill="#000"/><rect x="24.2855" y="202.869" width="0.693001" height="6.23701" fill="#000"/><rect x="20.8205" y="209.799" width="1.0395" height="6.23701" fill="#000"/><rect x="18.395" y="209.799" width="1.0395" height="2.772" fill="#800000"/><rect x="17.009" y="214.65" width="1.0395" height="2.772" fill="#800000"/><rect x="21.5135" y="204.948" width="0.693001" height="4.158" fill="#800000"/><rect x="19.4345" y="203.562" width="0.693001" height="1.386" fill="#800000"/><rect x="14.237" y="219.501" width="1.0395" height="1.386" fill="#800000"/><rect x="23.246" y="209.799" width="1.7325" height="13.167" fill="#700000"/><rect x="26.1566" y="216.036" width="1.9404" height="6.93001" fill="#700000"/><rect x="19.4345" y="218.808" width="1.386" height="4.158" fill="#800000"/><rect x="16.316" y="220.887" width="0.693001" height="2.079" fill="#800000"/><rect x="37.799" y="206.334" width="1.386" height="4.851" fill="#0000ff"/><rect x="38.492" y="212.571" width="1.386" height="6.23701" fill="#0000ff"/><rect x="31.9085" y="216.036" width="2.079" height="6.93001" fill="#0000ff"/><rect x="35.3735" y="209.106" width="1.0395" height="5.54401" fill="#0000ff"/><rect x="41.264" y="210.492" width="1.0395" height="2.772" fill="#0000ff"/><rect x="41.957" y="216.036" width="1.0395" height="2.772" fill="#0000ff"/><rect x="42.9965" y="220.887" width="1.0395" height="2.079" fill="#0000ff"/><rect x="39.878" y="220.194" width="1.0395" height="2.772" fill="#0000ff"/><rect x="36.413" y="218.808" width="1.0395" height="4.158" fill="#0000ff"/><rect x="34.334" y="193.167" width="1.0395" height="6.23701" fill="#202020"/><rect x="37.106" y="200.097" width="1.0395" height="2.772" fill="#202020"/><rect x="32.255" y="200.097" width="0.693001" height="9.00901" fill="#000"/><rect x="35.3735" y="202.869" width="1.0395" height="6.23701" fill="#000"/><rect x="39.878" y="204.255" width="1.0395" height="2.079" fill="#303030"/><rect x="30.869" y="144.93" width="1.0395" height="3.465" fill="#00c000"/><rect x="31.9085" y="150.128" width="1.0395" height="1.7325" fill="#00c000"/><rect x="32.948" y="153.939" width="1.0395" height="3.1185" fill="#00c000"/><rect x="33.9875" y="158.79" width="1.0395" height="1.386" fill="#00c000"/><rect x="27.0575" y="143.891" width="1.0395" height="1.0395" fill="#a0a0a0"/><rect x="26.1566" y="149.088" width="0.900901" height="1.0395" fill="#a0a0a0"/><rect x="24.9785" y="151.86" width="1.1781" height="3.1185" fill="#a0a0a0"/>
<g clip-path="url(#c22)"><rect x="50" y="140" width="18.4" height="84" fill="url(#rb2)"/><rect x="68.4" y="140" width="22" height="84" fill="url(#rb2d)"/><rect x="65" y="185" width="1.2" height="12" fill="#703000"/><rect x="68" y="195" width="1.2" height="10" fill="#802000"/><rect x="70" y="203" width="1.2" height="20" fill="#601010"/><rect x="72" y="205" width="1.2" height="18" fill="#00e0f0"/><rect x="72" y="213" width="1.2" height="10" fill="#c000e0"/><rect x="72" y="218" width="1.2" height="5" fill="#f02000"/><rect x="75" y="191" width="1.2" height="12" fill="#f0e000"/><rect x="75" y="203" width="1.2" height="6" fill="#40f000"/><rect x="76" y="207" width="1.2" height="8" fill="#00d0f0"/><rect x="76" y="215" width="1.2" height="4" fill="#e000e0"/><rect x="76" y="219" width="1.2" height="4" fill="#f08000"/><rect x="78" y="197" width="1.2" height="8" fill="#a0f000"/><rect x="78" y="211" width="1.2" height="6" fill="#4040f0"/><rect x="79" y="217" width="1.2" height="6" fill="#f000c0"/><rect x="81" y="203" width="1.2" height="6" fill="#00e0e0"/><rect x="81" y="213" width="1.2" height="6" fill="#c000f0"/><rect x="81" y="219" width="1.2" height="4" fill="#f06000"/><rect x="83" y="215" width="1.2" height="8" fill="#f0a000"/><rect x="85" y="219" width="1.2" height="4" fill="#f0e000"/><rect x="62" y="211" width="1.2" height="8" fill="#6000a0"/><rect x="64" y="215" width="1.2" height="8" fill="#f00060"/><rect x="67" y="213" width="1.2" height="10" fill="#f02020"/><rect x="59" y="217" width="1.2" height="6" fill="#c00080"/><rect x="77" y="189" width="1" height="1.5" fill="#f0e000"/><rect x="80" y="196" width="1" height="1.5" fill="#f0e000"/></g>
<rect x="49" y="55" width="1" height="169" fill="#808080"/>
<rect x="90" y="55" width="1" height="169" fill="#808080"/>
<rect x="130" y="55" width="1" height="169" fill="#808080"/>
<rect x="171" y="55" width="1" height="169" fill="#808080"/>
<rect x="212" y="55" width="1" height="169" fill="#808080"/>
<rect x="252" y="55" width="1" height="169" fill="#808080"/>
<rect x="293" y="55" width="1" height="169" fill="#808080"/>
<rect x="334" y="55" width="1" height="169" fill="#808080"/>
<rect x="374" y="55" width="1" height="169" fill="#808080"/>
<rect x="415" y="55" width="1" height="169" fill="#808080"/>
<rect x="456" y="55" width="1" height="169" fill="#808080"/>
<rect x="496" y="55" width="1" height="169" fill="#808080"/>
<rect x="537" y="55" width="1" height="169" fill="#808080"/>
<rect x="578" y="55" width="1" height="169" fill="#808080"/>
<rect x="9" y="139" width="577" height="1" fill="#808080"/>
<rect x="9" y="223" width="577" height="1" fill="#808080"/>
<rect x="585" y="54" width="1" height="171" fill="#6a6a6a"/>
<path d="M9 55.5 H50" stroke="#ffff00" stroke-width="1" stroke-dasharray="4 4" fill="none"/>
<path d="M9.5 57 V140" stroke="#ffff00" stroke-width="1" stroke-dasharray="4 4" stroke-dashoffset="-4" fill="none"/>
<path d="M49.5 54 V141" stroke="#ffff00" stroke-width="3" stroke-dasharray="4 4" stroke-dashoffset="0" fill="none"/>
<path d="M11 139.5 H47 M47 139.5 H51" stroke="#ffff00" stroke-width="3" stroke-dasharray="4 4" fill="none"/>
</svg>
<div class="a" style="left:8px;top:224px;width:578px;height:1px;background:#6a6a6a"></div>
<div class="a" style="left:590px;top:54px;width:198px;height:171px;background:#000;border:1px solid #6a6a6a"></div>
<svg class="a" style="left:590px;top:54px" width="198" height="171" viewBox="590 54 198 171" shape-rendering="crispEdges" id="pvsvg"><rect x="688" y="64" width="2" height="2" fill="#8c8c8c"/><rect x="687" y="67" width="1" height="2" fill="#ff0000"/><rect x="688" y="67" width="3" height="2" fill="#8c8c8c"/><rect x="686" y="70" width="2" height="2" fill="#ff0000"/><rect x="688" y="70" width="4" height="2" fill="#8c8c8c"/><rect x="685" y="73" width="3" height="2" fill="#ff0000"/><rect x="688" y="73" width="5" height="2" fill="#8c8c8c"/><rect x="684" y="76" width="3" height="2" fill="#ff0000"/><rect x="688" y="76" width="5" height="2" fill="#8c8c8c"/><rect x="684" y="79" width="2" height="2" fill="#ff0000"/><rect x="688" y="79" width="6" height="2" fill="#8c8c8c"/><rect x="683" y="82" width="3" height="2" fill="#ff0000"/><rect x="687" y="82" width="3" height="2" fill="#0000ff"/><rect x="690" y="82" width="5" height="2" fill="#8c8c8c"/><rect x="682" y="85" width="3" height="2" fill="#ff0000"/><rect x="687" y="85" width="3" height="2" fill="#0000ff"/><rect x="690" y="85" width="6" height="2" fill="#8c8c8c"/><rect x="681" y="88" width="4" height="2" fill="#ff0000"/><rect x="687" y="88" width="3" height="2" fill="#0000ff"/><rect x="690" y="88" width="7" height="2" fill="#8c8c8c"/><rect x="680" y="91" width="4" height="2" fill="#ff0000"/><rect x="686" y="91" width="4" height="2" fill="#0000ff"/><rect x="690" y="91" width="7" height="2" fill="#8c8c8c"/><rect x="680" y="94" width="5" height="2" fill="#b80000"/><rect x="685" y="94" width="7" height="2" fill="#0000ff"/><rect x="692" y="94" width="6" height="2" fill="#8c8c8c"/><rect x="679" y="97" width="5" height="2" fill="#b80000"/><rect x="684" y="97" width="8" height="2" fill="#0000ff"/><rect x="692" y="97" width="7" height="2" fill="#8c8c8c"/><rect x="678" y="100" width="5" height="2" fill="#b80000"/><rect x="684" y="100" width="9" height="2" fill="#0000ff"/><rect x="693" y="100" width="7" height="2" fill="#8c8c8c"/><rect x="677" y="104" width="6" height="2" fill="#b80000"/><rect x="684" y="104" width="9" height="2" fill="#0000ff"/><rect x="693" y="104" width="8" height="2" fill="#8c8c8c"/><rect x="676" y="107" width="5" height="2" fill="#b80000"/><rect x="681" y="107" width="4" height="2" fill="#0000ff"/><rect x="686" y="107" width="6" height="2" fill="#0000ff"/><rect x="693" y="107" width="2" height="2" fill="#0000ff"/><rect x="696" y="107" width="6" height="2" fill="#8c8c8c"/><rect x="676" y="110" width="5" height="2" fill="#b80000"/><rect x="681" y="110" width="4" height="2" fill="#0000ff"/><rect x="686" y="110" width="6" height="2" fill="#0000ff"/><rect x="693" y="110" width="2" height="2" fill="#0000ff"/><rect x="696" y="110" width="6" height="2" fill="#8c8c8c"/><rect x="675" y="113" width="5" height="2" fill="#b80000"/><rect x="680" y="113" width="2" height="2" fill="#0000ff"/><rect x="682" y="113" width="1" height="2" fill="#800000"/><rect x="683" y="113" width="4" height="2" fill="#0000ff"/><rect x="688" y="113" width="2" height="2" fill="#0000ff"/><rect x="691" y="113" width="4" height="2" fill="#0000ff"/><rect x="697" y="113" width="6" height="2" fill="#8c8c8c"/><rect x="674" y="116" width="6" height="2" fill="#b80000"/><rect x="680" y="116" width="4" height="2" fill="#0000ff"/><rect x="685" y="116" width="2" height="2" fill="#0000ff"/><rect x="688" y="116" width="2" height="2" fill="#0000ff"/><rect x="691" y="116" width="2" height="2" fill="#0000ff"/><rect x="694" y="116" width="2" height="2" fill="#0000ff"/><rect x="697" y="116" width="7" height="2" fill="#8c8c8c"/><rect x="674" y="119" width="3" height="2" fill="#b80000"/><rect x="677" y="119" width="2" height="2" fill="#0000ff"/><rect x="679" y="119" width="1" height="2" fill="#800000"/><rect x="680" y="119" width="4" height="2" fill="#0000ff"/><rect x="684" y="119" width="1" height="2" fill="#800000"/><rect x="685" y="119" width="2" height="2" fill="#0000ff"/><rect x="687" y="119" width="1" height="2" fill="#800000"/><rect x="688" y="119" width="2" height="2" fill="#0000ff"/><rect x="691" y="119" width="2" height="2" fill="#0000ff"/><rect x="700" y="119" width="5" height="2" fill="#b4b4b4"/><rect x="673" y="122" width="4" height="2" fill="#b80000"/><rect x="677" y="122" width="4" height="2" fill="#0000ff"/><rect x="681" y="122" width="1" height="2" fill="#800000"/><rect x="682" y="122" width="2" height="2" fill="#0000ff"/><rect x="684" y="122" width="1" height="2" fill="#800000"/><rect x="685" y="122" width="2" height="2" fill="#0000ff"/><rect x="687" y="122" width="1" height="2" fill="#800000"/><rect x="688" y="122" width="2" height="2" fill="#0000ff"/><rect x="691" y="122" width="2" height="2" fill="#0000ff"/><rect x="700" y="122" width="6" height="2" fill="#b4b4b4"/><rect x="672" y="125" width="4" height="2" fill="#b80000"/><rect x="676" y="125" width="3" height="2" fill="#0000ff"/><rect x="679" y="125" width="1" height="2" fill="#800000"/><rect x="680" y="125" width="1" height="2" fill="#0000ff"/><rect x="681" y="125" width="1" height="2" fill="#800000"/><rect x="682" y="125" width="2" height="2" fill="#0000ff"/><rect x="684" y="125" width="1" height="2" fill="#800000"/><rect x="685" y="125" width="2" height="2" fill="#0000ff"/><rect x="687" y="125" width="1" height="2" fill="#800000"/><rect x="688" y="125" width="2" height="2" fill="#0000ff"/><rect x="691" y="125" width="2" height="2" fill="#0000ff"/><rect x="701" y="125" width="5" height="2" fill="#b4b4b4"/><rect x="671" y="128" width="5" height="2" fill="#b80000"/><rect x="676" y="128" width="4" height="2" fill="#0000ff"/><rect x="680" y="128" width="2" height="2" fill="#800000"/><rect x="682" y="128" width="2" height="2" fill="#0000ff"/><rect x="684" y="128" width="1" height="2" fill="#800000"/><rect x="685" y="128" width="2" height="2" fill="#0000ff"/><rect x="687" y="128" width="1" height="2" fill="#800000"/><rect x="688" y="128" width="2" height="2" fill="#0000ff"/><rect x="691" y="128" width="2" height="2" fill="#0000ff"/><rect x="702" y="128" width="5" height="2" fill="#dcdcdc"/><rect x="672" y="131" width="1" height="2" fill="#800000"/><rect x="673" y="131" width="4" height="2" fill="#0000ff"/><rect x="677" y="131" width="1" height="2" fill="#800000"/><rect x="678" y="131" width="2" height="2" fill="#0000ff"/><rect x="680" y="131" width="2" height="2" fill="#800000"/><rect x="682" y="131" width="2" height="2" fill="#0000ff"/><rect x="684" y="131" width="1" height="2" fill="#800000"/><rect x="685" y="131" width="2" height="2" fill="#0000ff"/><rect x="687" y="131" width="1" height="2" fill="#800000"/><rect x="688" y="131" width="2" height="2" fill="#0000ff"/><rect x="703" y="131" width="5" height="2" fill="#ffffff"/><rect x="672" y="134" width="4" height="2" fill="#0000ff"/><rect x="676" y="134" width="2" height="2" fill="#800000"/><rect x="678" y="134" width="2" height="2" fill="#0000ff"/><rect x="680" y="134" width="2" height="2" fill="#800000"/><rect x="682" y="134" width="2" height="2" fill="#0000ff"/><rect x="684" y="134" width="1" height="2" fill="#800000"/><rect x="685" y="134" width="2" height="2" fill="#0000ff"/><rect x="687" y="134" width="1" height="2" fill="#800000"/><rect x="688" y="134" width="2" height="2" fill="#0000ff"/><rect x="704" y="134" width="5" height="2" fill="#ffffff"/><rect x="670" y="137" width="1" height="2" fill="#800000"/><rect x="671" y="137" width="2" height="2" fill="#0000ff"/><rect x="673" y="137" width="1" height="2" fill="#800000"/><rect x="674" y="137" width="2" height="2" fill="#0000ff"/><rect x="676" y="137" width="1" height="2" fill="#800000"/><rect x="677" y="137" width="2" height="2" fill="#0000ff"/><rect x="679" y="137" width="1" height="2" fill="#800000"/><rect x="680" y="137" width="2" height="2" fill="#0000ff"/><rect x="682" y="137" width="1" height="2" fill="#800000"/><rect x="683" y="137" width="2" height="2" fill="#0000ff"/><rect x="685" y="137" width="1" height="2" fill="#800000"/><rect x="686" y="137" width="2" height="2" fill="#0000ff"/><rect x="688" y="137" width="2" height="2" fill="#0000ff"/><rect x="705" y="137" width="5" height="2" fill="#ffffff"/><rect x="671" y="140" width="4" height="2" fill="#0000ff"/><rect x="675" y="140" width="1" height="2" fill="#800000"/><rect x="676" y="140" width="1" height="2" fill="#0000ff"/><rect x="677" y="140" width="1" height="2" fill="#800000"/><rect x="678" y="140" width="2" height="2" fill="#0000ff"/><rect x="680" y="140" width="1" height="2" fill="#800000"/><rect x="681" y="140" width="2" height="2" fill="#0000ff"/><rect x="683" y="140" width="1" height="2" fill="#800000"/><rect x="684" y="140" width="2" height="2" fill="#0000ff"/><rect x="686" y="140" width="1" height="2" fill="#800000"/><rect x="687" y="140" width="3" height="2" fill="#0000ff"/><rect x="705" y="140" width="5" height="2" fill="#ffffff"/><rect x="668" y="143" width="4" height="2" fill="#0000ff"/><rect x="672" y="143" width="1" height="2" fill="#800000"/><rect x="673" y="143" width="2" height="2" fill="#0000ff"/><rect x="675" y="143" width="2" height="2" fill="#800000"/><rect x="677" y="143" width="2" height="2" fill="#0000ff"/><rect x="679" y="143" width="1" height="2" fill="#800000"/><rect x="680" y="143" width="2" height="2" fill="#0000ff"/><rect x="682" y="143" width="2" height="2" fill="#800000"/><rect x="684" y="143" width="3" height="2" fill="#0000ff"/><rect x="703" y="143" width="2" height="2" fill="#ffffff"/><rect x="706" y="143" width="5" height="2" fill="#ffffff"/><rect x="667" y="146" width="6" height="2" fill="#0000ff"/><rect x="673" y="146" width="2" height="2" fill="#800000"/><rect x="675" y="146" width="2" height="2" fill="#0000ff"/><rect x="677" y="146" width="2" height="2" fill="#800000"/><rect x="679" y="146" width="2" height="2" fill="#0000ff"/><rect x="681" y="146" width="2" height="2" fill="#800000"/><rect x="683" y="146" width="2" height="2" fill="#0000ff"/><rect x="686" y="146" width="2" height="2" fill="#800000"/><rect x="705" y="146" width="2" height="2" fill="#ffffff"/><rect x="708" y="146" width="5" height="2" fill="#ffffff"/><rect x="667" y="149" width="6" height="2" fill="#0000ff"/><rect x="673" y="149" width="2" height="2" fill="#800000"/><rect x="675" y="149" width="2" height="2" fill="#0000ff"/><rect x="677" y="149" width="2" height="2" fill="#800000"/><rect x="679" y="149" width="2" height="2" fill="#0000ff"/><rect x="681" y="149" width="2" height="2" fill="#800000"/><rect x="683" y="149" width="2" height="2" fill="#0000ff"/><rect x="686" y="149" width="2" height="2" fill="#800000"/><rect x="705" y="149" width="8" height="2" fill="#ffffff"/><rect x="666" y="152" width="5" height="2" fill="#0000ff"/><rect x="671" y="152" width="2" height="2" fill="#800000"/><rect x="673" y="152" width="2" height="2" fill="#0000ff"/><rect x="675" y="152" width="1" height="2" fill="#800000"/><rect x="676" y="152" width="2" height="2" fill="#0000ff"/><rect x="678" y="152" width="1" height="2" fill="#800000"/><rect x="679" y="152" width="2" height="2" fill="#0000ff"/><rect x="681" y="152" width="2" height="2" fill="#800000"/><rect x="683" y="152" width="2" height="2" fill="#0000ff"/><rect x="686" y="152" width="2" height="2" fill="#800000"/><rect x="705" y="152" width="2" height="2" fill="#ffffff"/><rect x="708" y="152" width="6" height="2" fill="#ffffff"/><rect x="664" y="155" width="5" height="2" fill="#0000ff"/><rect x="670" y="155" width="2" height="2" fill="#0000ff"/><rect x="672" y="155" width="2" height="2" fill="#800000"/><rect x="674" y="155" width="2" height="2" fill="#0000ff"/><rect x="678" y="155" width="2" height="2" fill="#0000ff"/><rect x="681" y="155" width="2" height="2" fill="#800000"/><rect x="686" y="155" width="2" height="2" fill="#800000"/><rect x="690" y="155" width="2" height="2" fill="#800000"/><rect x="702" y="155" width="2" height="2" fill="#ffffff"/><rect x="706" y="155" width="2" height="2" fill="#ffffff"/><rect x="709" y="155" width="6" height="2" fill="#ffffff"/><rect x="663" y="158" width="4" height="2" fill="#0000ff"/><rect x="668" y="158" width="1" height="2" fill="#0000ff"/><rect x="670" y="158" width="2" height="2" fill="#0000ff"/><rect x="672" y="158" width="1" height="2" fill="#800000"/><rect x="674" y="158" width="2" height="2" fill="#0000ff"/><rect x="678" y="158" width="2" height="2" fill="#0000ff"/><rect x="681" y="158" width="1" height="2" fill="#800000"/><rect x="685" y="158" width="2" height="2" fill="#800000"/><rect x="691" y="158" width="2" height="2" fill="#800000"/><rect x="703" y="158" width="1" height="2" fill="#ffffff"/><rect x="707" y="158" width="1" height="2" fill="#ffffff"/><rect x="710" y="158" width="5" height="2" fill="#ffffff"/><rect x="662" y="161" width="6" height="2" fill="#0000ff"/><rect x="669" y="161" width="2" height="2" fill="#0000ff"/><rect x="671" y="161" width="2" height="2" fill="#800000"/><rect x="673" y="161" width="2" height="2" fill="#0000ff"/><rect x="675" y="161" width="1" height="2" fill="#800000"/><rect x="676" y="161" width="2" height="2" fill="#0000ff"/><rect x="679" y="161" width="2" height="2" fill="#0000ff"/><rect x="681" y="161" width="1" height="2" fill="#800000"/><rect x="685" y="161" width="2" height="2" fill="#800000"/><rect x="691" y="161" width="2" height="2" fill="#800000"/><rect x="703" y="161" width="2" height="2" fill="#ffffff"/><rect x="707" y="161" width="2" height="2" fill="#ffffff"/><rect x="710" y="161" width="6" height="2" fill="#ffffff"/><rect x="662" y="164" width="5" height="2" fill="#0000ff"/><rect x="669" y="164" width="2" height="2" fill="#800000"/><rect x="671" y="164" width="1" height="2" fill="#0000ff"/><rect x="672" y="164" width="2" height="2" fill="#800000"/><rect x="674" y="164" width="1" height="2" fill="#0000ff"/><rect x="675" y="164" width="1" height="2" fill="#800000"/><rect x="676" y="164" width="2" height="2" fill="#0000ff"/><rect x="680" y="164" width="2" height="2" fill="#800000"/><rect x="685" y="164" width="2" height="2" fill="#800000"/><rect x="691" y="164" width="2" height="2" fill="#800000"/><rect x="703" y="164" width="2" height="2" fill="#ffffff"/><rect x="707" y="164" width="2" height="2" fill="#ffffff"/><rect x="711" y="164" width="6" height="2" fill="#ffffff"/><rect x="660" y="167" width="4" height="2" fill="#0000ff"/><rect x="665" y="167" width="2" height="2" fill="#0000ff"/><rect x="668" y="167" width="2" height="2" fill="#0000ff"/><rect x="672" y="167" width="2" height="2" fill="#0000ff"/><rect x="675" y="167" width="2" height="2" fill="#800000"/><rect x="680" y="167" width="2" height="2" fill="#800000"/><rect x="685" y="167" width="2" height="2" fill="#800000"/><rect x="691" y="167" width="2" height="2" fill="#800000"/><rect x="696" y="167" width="2" height="2" fill="#800000"/><rect x="699" y="167" width="2" height="2" fill="#ffffff"/><rect x="704" y="167" width="2" height="2" fill="#ffffff"/><rect x="708" y="167" width="2" height="2" fill="#ffffff"/><rect x="711" y="167" width="2" height="2" fill="#ffffff"/><rect x="714" y="167" width="3" height="2" fill="#ffffff"/><rect x="660" y="170" width="4" height="2" fill="#0000ff"/><rect x="665" y="170" width="1" height="2" fill="#0000ff"/><rect x="668" y="170" width="1" height="2" fill="#0000ff"/><rect x="672" y="170" width="2" height="2" fill="#0000ff"/><rect x="675" y="170" width="1" height="2" fill="#800000"/><rect x="680" y="170" width="2" height="2" fill="#800000"/><rect x="685" y="170" width="2" height="2" fill="#800000"/><rect x="691" y="170" width="2" height="2" fill="#800000"/><rect x="696" y="170" width="2" height="2" fill="#800000"/><rect x="699" y="170" width="2" height="2" fill="#ffffff"/><rect x="704" y="170" width="2" height="2" fill="#ffffff"/><rect x="709" y="170" width="2" height="2" fill="#ffffff"/><rect x="712" y="170" width="2" height="2" fill="#ffffff"/><rect x="715" y="170" width="3" height="2" fill="#ffffff"/><rect x="659" y="173" width="6" height="2" fill="#0000ff"/><rect x="667" y="173" width="2" height="2" fill="#0000ff"/><rect x="671" y="173" width="2" height="2" fill="#0000ff"/><rect x="674" y="173" width="2" height="2" fill="#800000"/><rect x="679" y="173" width="2" height="2" fill="#800000"/><rect x="685" y="173" width="2" height="2" fill="#800000"/><rect x="691" y="173" width="2" height="2" fill="#800000"/><rect x="697" y="173" width="2" height="2" fill="#800000"/><rect x="700" y="173" width="2" height="2" fill="#ffffff"/><rect x="705" y="173" width="2" height="2" fill="#ffffff"/><rect x="709" y="173" width="2" height="2" fill="#ffffff"/><rect x="713" y="173" width="6" height="2" fill="#ffffff"/><rect x="658" y="177" width="4" height="2" fill="#0000ff"/><rect x="663" y="177" width="2" height="2" fill="#0000ff"/><rect x="666" y="177" width="2" height="2" fill="#0000ff"/><rect x="671" y="177" width="2" height="2" fill="#0000ff"/><rect x="673" y="177" width="2" height="2" fill="#800000"/><rect x="679" y="177" width="2" height="2" fill="#800000"/><rect x="685" y="177" width="2" height="2" fill="#800000"/><rect x="691" y="177" width="2" height="2" fill="#800000"/><rect x="697" y="177" width="2" height="2" fill="#800000"/><rect x="700" y="177" width="2" height="2" fill="#ffffff"/><rect x="705" y="177" width="2" height="2" fill="#ffffff"/><rect x="710" y="177" width="2" height="2" fill="#ffffff"/><rect x="713" y="177" width="2" height="2" fill="#ffffff"/><rect x="716" y="177" width="4" height="2" fill="#ffffff"/><rect x="657" y="180" width="4" height="2" fill="#0000ff"/><rect x="662" y="180" width="2" height="2" fill="#0000ff"/><rect x="666" y="180" width="2" height="2" fill="#0000ff"/><rect x="679" y="180" width="2" height="2" fill="#800000"/><rect x="685" y="180" width="2" height="2" fill="#800000"/><rect x="691" y="180" width="2" height="2" fill="#800000"/><rect x="694" y="180" width="2" height="2" fill="#ffffff"/><rect x="697" y="180" width="2" height="2" fill="#800000"/><rect x="700" y="180" width="2" height="2" fill="#ffffff"/><rect x="703" y="180" width="2" height="2" fill="#800000"/><rect x="706" y="180" width="2" height="2" fill="#ffffff"/><rect x="710" y="180" width="2" height="2" fill="#ffffff"/><rect x="714" y="180" width="2" height="2" fill="#ffffff"/><rect x="717" y="180" width="3" height="2" fill="#ffffff"/><rect x="656" y="183" width="4" height="2" fill="#0000ff"/><rect x="661" y="183" width="2" height="2" fill="#0000ff"/><rect x="665" y="183" width="2" height="2" fill="#0000ff"/><rect x="679" y="183" width="2" height="2" fill="#800000"/><rect x="685" y="183" width="2" height="2" fill="#800000"/><rect x="691" y="183" width="2" height="2" fill="#800000"/><rect x="694" y="183" width="2" height="2" fill="#ffffff"/><rect x="697" y="183" width="2" height="2" fill="#800000"/><rect x="700" y="183" width="3" height="2" fill="#ffffff"/><rect x="703" y="183" width="2" height="2" fill="#800000"/><rect x="706" y="183" width="2" height="2" fill="#ffffff"/><rect x="711" y="183" width="2" height="2" fill="#ffffff"/><rect x="715" y="183" width="2" height="2" fill="#ffffff"/><rect x="718" y="183" width="2" height="2" fill="#ffffff"/><rect x="656" y="186" width="3" height="2" fill="#0000ff"/><rect x="661" y="186" width="2" height="2" fill="#0000ff"/><rect x="665" y="186" width="2" height="2" fill="#0000ff"/><rect x="678" y="186" width="2" height="2" fill="#800000"/><rect x="685" y="186" width="2" height="2" fill="#800000"/><rect x="691" y="186" width="2" height="2" fill="#800000"/><rect x="695" y="186" width="2" height="2" fill="#ffffff"/><rect x="698" y="186" width="2" height="2" fill="#800000"/><rect x="701" y="186" width="2" height="2" fill="#ffffff"/><rect x="704" y="186" width="2" height="2" fill="#800000"/><rect x="707" y="186" width="2" height="2" fill="#ffffff"/><rect x="711" y="186" width="2" height="2" fill="#ffffff"/><rect x="715" y="186" width="2" height="2" fill="#ffffff"/><rect x="718" y="186" width="2" height="2" fill="#ffffff"/><rect x="655" y="189" width="4" height="2" fill="#0000ff"/><rect x="660" y="189" width="2" height="2" fill="#0000ff"/><rect x="664" y="189" width="2" height="2" fill="#0000ff"/><rect x="678" y="189" width="2" height="2" fill="#800000"/><rect x="685" y="189" width="2" height="2" fill="#800000"/><rect x="691" y="189" width="2" height="2" fill="#800000"/><rect x="695" y="189" width="2" height="2" fill="#ffffff"/><rect x="698" y="189" width="2" height="2" fill="#800000"/><rect x="701" y="189" width="2" height="2" fill="#ffffff"/><rect x="704" y="189" width="2" height="2" fill="#800000"/><rect x="707" y="189" width="2" height="2" fill="#ffffff"/><rect x="712" y="189" width="2" height="2" fill="#ffffff"/><rect x="716" y="189" width="2" height="2" fill="#ffffff"/><rect x="719" y="189" width="2" height="2" fill="#ffffff"/><rect x="654" y="192" width="4" height="2" fill="#0000ff"/><rect x="659" y="192" width="2" height="2" fill="#0000ff"/><rect x="685" y="192" width="2" height="2" fill="#800000"/><rect x="688" y="192" width="2" height="2" fill="#ffffff"/><rect x="692" y="192" width="2" height="2" fill="#800000"/><rect x="695" y="192" width="2" height="2" fill="#ffffff"/><rect x="698" y="192" width="2" height="2" fill="#800000"/><rect x="701" y="192" width="2" height="2" fill="#ffffff"/><rect x="704" y="192" width="2" height="2" fill="#800000"/><rect x="707" y="192" width="2" height="2" fill="#ffffff"/><rect x="710" y="192" width="2" height="2" fill="#800000"/><rect x="713" y="192" width="2" height="2" fill="#ffffff"/><rect x="717" y="192" width="2" height="2" fill="#ffffff"/><rect x="653" y="195" width="5" height="2" fill="#0000ff"/><rect x="658" y="195" width="2" height="2" fill="#0000ff"/><rect x="684" y="195" width="2" height="2" fill="#800000"/><rect x="688" y="195" width="2" height="2" fill="#ffffff"/><rect x="692" y="195" width="2" height="2" fill="#800000"/><rect x="695" y="195" width="2" height="2" fill="#ffffff"/><rect x="699" y="195" width="2" height="2" fill="#800000"/><rect x="702" y="195" width="2" height="2" fill="#ffffff"/><rect x="705" y="195" width="2" height="2" fill="#800000"/><rect x="708" y="195" width="2" height="2" fill="#ffffff"/><rect x="711" y="195" width="2" height="2" fill="#800000"/><rect x="713" y="195" width="2" height="2" fill="#ffffff"/><rect x="718" y="195" width="2" height="2" fill="#ffffff"/><rect x="652" y="198" width="4" height="2" fill="#0000ff"/><rect x="657" y="198" width="2" height="2" fill="#0000ff"/><rect x="684" y="198" width="2" height="2" fill="#800000"/><rect x="688" y="198" width="2" height="2" fill="#ffffff"/><rect x="692" y="198" width="2" height="2" fill="#800000"/><rect x="695" y="198" width="2" height="2" fill="#ffffff"/><rect x="699" y="198" width="2" height="2" fill="#800000"/><rect x="702" y="198" width="2" height="2" fill="#ffffff"/><rect x="705" y="198" width="2" height="2" fill="#800000"/><rect x="708" y="198" width="2" height="2" fill="#ffffff"/><rect x="711" y="198" width="2" height="2" fill="#800000"/><rect x="714" y="198" width="2" height="2" fill="#ffffff"/><rect x="718" y="198" width="2" height="2" fill="#ffffff"/><rect x="652" y="201" width="4" height="2" fill="#0000ff"/><rect x="657" y="201" width="2" height="2" fill="#0000ff"/><rect x="684" y="201" width="2" height="2" fill="#800000"/><rect x="688" y="201" width="2" height="2" fill="#ffffff"/><rect x="692" y="201" width="2" height="2" fill="#800000"/><rect x="695" y="201" width="2" height="2" fill="#ffffff"/><rect x="699" y="201" width="2" height="2" fill="#800000"/><rect x="702" y="201" width="2" height="2" fill="#ffffff"/><rect x="705" y="201" width="2" height="2" fill="#800000"/><rect x="708" y="201" width="2" height="2" fill="#ffffff"/><rect x="712" y="201" width="2" height="2" fill="#800000"/><rect x="714" y="201" width="2" height="2" fill="#ffffff"/><rect x="718" y="201" width="3" height="2" fill="#ffffff"/><rect x="651" y="204" width="4" height="2" fill="#0000ff"/><rect x="656" y="204" width="1" height="2" fill="#00008c"/><rect x="659" y="204" width="2" height="2" fill="#00008c"/><rect x="681" y="204" width="2" height="2" fill="#ffffff"/><rect x="684" y="204" width="2" height="2" fill="#800000"/><rect x="688" y="204" width="2" height="2" fill="#ffffff"/><rect x="692" y="204" width="2" height="2" fill="#800000"/><rect x="695" y="204" width="2" height="2" fill="#ffffff"/><rect x="699" y="204" width="2" height="2" fill="#800000"/><rect x="703" y="204" width="2" height="2" fill="#ffffff"/><rect x="706" y="204" width="2" height="2" fill="#800000"/><rect x="709" y="204" width="2" height="2" fill="#ffffff"/><rect x="712" y="204" width="2" height="2" fill="#800000"/><rect x="715" y="204" width="2" height="2" fill="#ffffff"/><rect x="718" y="204" width="1" height="2" fill="#800000"/><rect x="650" y="207" width="5" height="2" fill="#0000ff"/><rect x="658" y="207" width="2" height="2" fill="#00008c"/><rect x="680" y="207" width="2" height="2" fill="#ffffff"/><rect x="684" y="207" width="2" height="2" fill="#800000"/><rect x="688" y="207" width="2" height="2" fill="#ffffff"/><rect x="692" y="207" width="2" height="2" fill="#800000"/><rect x="696" y="207" width="2" height="2" fill="#ffffff"/><rect x="700" y="207" width="2" height="2" fill="#800000"/><rect x="703" y="207" width="2" height="2" fill="#ffffff"/><rect x="707" y="207" width="2" height="2" fill="#800000"/><rect x="710" y="207" width="2" height="2" fill="#ffffff"/><rect x="713" y="207" width="2" height="2" fill="#800000"/><rect x="716" y="207" width="2" height="2" fill="#ffffff"/><rect x="719" y="207" width="1" height="2" fill="#800000"/><rect x="649" y="210" width="5" height="2" fill="#0000ff"/><rect x="657" y="210" width="2" height="2" fill="#00008c"/><rect x="680" y="210" width="2" height="2" fill="#ffffff"/><rect x="684" y="210" width="2" height="2" fill="#800000"/><rect x="688" y="210" width="2" height="2" fill="#ffffff"/><rect x="692" y="210" width="2" height="2" fill="#800000"/><rect x="696" y="210" width="2" height="2" fill="#ffffff"/><rect x="700" y="210" width="2" height="2" fill="#800000"/><rect x="704" y="210" width="2" height="2" fill="#ffffff"/><rect x="708" y="210" width="2" height="2" fill="#800000"/><rect x="711" y="210" width="2" height="2" fill="#ffffff"/><rect x="714" y="210" width="2" height="2" fill="#800000"/><rect x="717" y="210" width="2" height="2" fill="#ffffff"/><rect x="720" y="210" width="1" height="2" fill="#800000"/><rect x="648" y="213" width="5" height="2" fill="#0000ff"/><rect x="657" y="213" width="2" height="2" fill="#00008c"/><rect x="680" y="213" width="2" height="2" fill="#ffffff"/><rect x="684" y="213" width="2" height="2" fill="#800000"/><rect x="688" y="213" width="2" height="2" fill="#ffffff"/><rect x="692" y="213" width="2" height="2" fill="#800000"/><rect x="696" y="213" width="2" height="2" fill="#ffffff"/><rect x="700" y="213" width="2" height="2" fill="#800000"/><rect x="704" y="213" width="2" height="2" fill="#ffffff"/><rect x="708" y="213" width="2" height="2" fill="#800000"/><rect x="711" y="213" width="2" height="2" fill="#ffffff"/><rect x="715" y="213" width="2" height="2" fill="#800000"/><rect x="717" y="213" width="2" height="2" fill="#ffffff"/><rect x="720" y="213" width="1" height="2" fill="#800000"/></svg>
<div class="a" style="left:8px;top:229px;width:780px;height:398px;border:1px solid #696969;background:#f0f0f0"></div>
<div class="a" style="left:9px;top:250px;width:776px;height:375px;border:1px solid #898c95;background:#f0f0f0;box-shadow:inset 0 0 0 1px #fff"></div>
<div class="a" style="left:10px;top:251px;width:3px;height:373px;background:#fff"></div>
<div class="a" style="left:10px;top:622px;width:774px;height:2px;background:#fff"></div>
<div class="a" style="left:785px;top:250px;width:2px;height:376px;background:#fff"></div>
<div class="a" style="left:786px;top:230px;width:1px;height:21px;background:#fff"></div>
<div class="a" style="left:129px;top:230px;width:657px;height:1px;background:#fff"></div>
<div class="a" style="left:9px;top:625px;width:778px;height:1px;background:#fff"></div>
<div class="a" style="left:9px;top:230px;width:120px;height:21px;background:#fff;border-left:1px solid #898c95;border-right:1px solid #898c95"></div>
<div class="t" style="left:16.30px;top:235px;font-size:11px;letter-spacing:-0.338px;">STC2-JingleBells.lms *</div>
<div class="a" style="left:13px;top:255px;width:143px;height:25px;background:linear-gradient(#fbfbfb 0,#f6f6f6 50%,#f0f0f0 100%);border-radius:2px"></div>
<div class="a" style="left:157px;top:255px;width:377px;height:25px;background:linear-gradient(#fbfbfb 0,#f6f6f6 50%,#f0f0f0 100%);border-radius:2px"></div>
<div class="a" style="left:535px;top:255px;width:245px;height:25px;background:linear-gradient(#fbfbfb 0,#f6f6f6 50%,#f0f0f0 100%);border-radius:2px"></div>
<div class="a" style="left:16px;top:280px;width:141px;height:25px;background:linear-gradient(#fbfbfb 0,#f6f6f6 50%,#f0f0f0 100%);border-radius:2px"></div>
<div class="a" style="left:157px;top:280px;width:377px;height:25px;background:linear-gradient(#fbfbfb 0,#f6f6f6 50%,#f0f0f0 100%);border-radius:2px"></div>
<div class="a" style="left:535px;top:280px;width:245px;height:25px;background:linear-gradient(#fbfbfb 0,#f6f6f6 50%,#f0f0f0 100%);border-radius:2px"></div>
<div class="a" style="left:13px;top:255px;width:23px;height:25px;background:#f0f0f0"></div>
<div class="a" style="left:36px;top:255px;width:120px;height:24px;background:linear-gradient(#f9f9f9,#f4f4f4)"></div>
<div class="a" style="left:231px;top:256px;width:121px;height:22px;background:#fcfcfc"></div>
<div class="a" style="left:241px;top:281px;width:121px;height:22px;background:#fcfcfc"></div>
<div class="a" style="left:536px;top:256px;width:96px;height:21px;background:#f1f1f1"></div>
<div class="a" style="left:535px;top:281px;width:245px;height:23px;background:#fbfbfb"></div>
<div class="a" style="left:156px;top:257px;width:1px;height:21px;background:#c5c5c5"></div><div class="a" style="left:157px;top:257px;width:1px;height:21px;background:#fff"></div>
<div class="a" style="left:534px;top:257px;width:1px;height:21px;background:#c5c5c5"></div><div class="a" style="left:535px;top:257px;width:1px;height:21px;background:#fff"></div>
<div class="a" style="left:156px;top:282px;width:1px;height:21px;background:#c5c5c5"></div><div class="a" style="left:157px;top:282px;width:1px;height:21px;background:#fff"></div>
<div class="a" style="left:364px;top:282px;width:1px;height:21px;background:#c5c5c5"></div><div class="a" style="left:365px;top:282px;width:1px;height:21px;background:#fff"></div>
<div class="a" style="left:534px;top:282px;width:1px;height:21px;background:#c5c5c5"></div><div class="a" style="left:535px;top:282px;width:1px;height:21px;background:#fff"></div>
<div class="a" style="left:484px;top:260px;width:1px;height:15px;background:#bdbdbd"></div><div class="a" style="left:485px;top:261px;width:1px;height:15px;background:#fff"></div>
<div class="a" style="left:447px;top:285px;width:1px;height:15px;background:#bdbdbd"></div><div class="a" style="left:448px;top:286px;width:1px;height:15px;background:#fff"></div>
<div class="t" style="left:40.60px;top:261px;font-size:12px;letter-spacing:-0.087px;">Christmas Sample</div>
<div class="t" style="left:161.40px;top:261px;font-size:12px;letter-spacing:-0.025px;">Prop View</div>
<div class="t" style="left:235.20px;top:261px;font-size:12px;letter-spacing:0.000px;">&lt;manually select&gt;</div>
<div class="t" style="left:540.30px;top:261px;font-size:12px;letter-spacing:-0.133px;">Effect Generator</div>
<div class="t" style="left:162.80px;top:286px;font-size:12px;letter-spacing:0.020px;">Timing Grid</div>
<div class="t" style="left:244.50px;top:286px;font-size:12px;letter-spacing:-0.413px;">Fixed Grid: 0.05</div>
<div class="t" style="left:538.30px;top:286px;font-size:12px;letter-spacing:-0.142px;">spirals/none/Mix_Average/2.30s on 32x50 tree</div>
<svg class="a" style="left:146px;top:266px" width="5" height="3" viewBox="0 0 5 3" shape-rendering="crispEdges"><rect x="0" y="0" width="5" height="1"/><rect x="1" y="1" width="3" height="1"/><rect x="2" y="2" width="1" height="1"/></svg>
<svg class="a" style="left:221px;top:266px" width="5" height="3" viewBox="0 0 5 3" shape-rendering="crispEdges"><rect x="0" y="0" width="5" height="1"/><rect x="1" y="1" width="3" height="1"/><rect x="2" y="2" width="1" height="1"/></svg>
<svg class="a" style="left:343px;top:266px" width="5" height="3" viewBox="0 0 5 3" shape-rendering="crispEdges"><rect x="0" y="0" width="5" height="1"/><rect x="1" y="1" width="3" height="1"/><rect x="2" y="2" width="1" height="1"/></svg>
<svg class="a" style="left:231px;top:291px" width="5" height="3" viewBox="0 0 5 3" shape-rendering="crispEdges"><rect x="0" y="0" width="5" height="1"/><rect x="1" y="1" width="3" height="1"/><rect x="2" y="2" width="1" height="1"/></svg>
<svg class="a" style="left:353px;top:291px" width="5" height="3" viewBox="0 0 5 3" shape-rendering="crispEdges"><rect x="0" y="0" width="5" height="1"/><rect x="1" y="1" width="3" height="1"/><rect x="2" y="2" width="1" height="1"/></svg>
<svg class="a" style="left:436px;top:291px" width="5" height="3" viewBox="0 0 5 3" shape-rendering="crispEdges"><rect x="0" y="0" width="5" height="1"/><rect x="1" y="1" width="3" height="1"/><rect x="2" y="2" width="1" height="1"/></svg>
<svg class="a" style="left:13px;top:254px" width="770" height="52" viewBox="13 254 770 52" id="icons">
<defs>
<linearGradient id="gplay" x1="0" y1="0" x2="0.6" y2="1"><stop offset="0" stop-color="#009800"/><stop offset=".55" stop-color="#10d810"/><stop offset="1" stop-color="#18f018"/></linearGradient>
<radialGradient id="gchk" cx=".4" cy=".3" r=".8"><stop offset="0" stop-color="#5cb84c"/><stop offset=".6" stop-color="#2e8f1e"/><stop offset="1" stop-color="#1f7a12"/></radialGradient>
<linearGradient id="ggrn" x1="0" y1="0" x2="1" y2="1"><stop offset="0" stop-color="#00c800"/><stop offset="1" stop-color="#38ff38"/></linearGradient>
<linearGradient id="gred" x1="0" y1="0" x2="1" y2="1"><stop offset="0" stop-color="#e00000"/><stop offset="1" stop-color="#ff4848"/></linearGradient>
<linearGradient id="gstop" x1="0" y1="0" x2="1" y2="1"><stop offset="0" stop-color="#d23a3a"/><stop offset="1" stop-color="#f08a8a"/></linearGradient>
<linearGradient id="gpause" x1="0" y1="0" x2="1" y2="0"><stop offset="0" stop-color="#9a9a9a"/><stop offset="1" stop-color="#c4c4c4"/></linearGradient>
<linearGradient id="gblue" x1="0" y1="0" x2="0" y2="1"><stop offset="0" stop-color="#1a8ee8"/><stop offset="1" stop-color="#9ad4ff"/></linearGradient>
<radialGradient id="ghelp" cx=".5" cy=".3" r=".8"><stop offset="0" stop-color="#5a8ff0"/><stop offset="1" stop-color="#1446c0"/></radialGradient>
</defs>
<circle cx="25.5" cy="265" r="8" fill="#e6f4e2" stroke="#9fd08f" stroke-width="1"/>
<circle cx="25.5" cy="265" r="6.5" fill="url(#gchk)"/>
<path d="M21.6 265.2 L24.4 268 L29.6 261.6" fill="none" stroke="#fff" stroke-width="2.2" stroke-linecap="round" stroke-linejoin="round"/>
<polygon points="22.5,284.5 35,290.5 22.5,296.5" fill="url(#gplay)" stroke="#002a00" stroke-width="1" stroke-linejoin="round"/>
<polygon points="45.5,283.5 58,289.5 45.5,295.5" fill="url(#gplay)" stroke="#002a00" stroke-width="1" stroke-linejoin="round"/>
<polygon points="68.5,283.5 81,289.5 68.5,295.5" fill="url(#gplay)" stroke="#002a00" stroke-width="1" stroke-linejoin="round"/>
<polygon points="91.5,283.5 104,289.5 91.5,295.5" fill="url(#gplay)" stroke="#002a00" stroke-width="1" stroke-linejoin="round"/>
<g fill="#000080" shape-rendering="crispEdges"><rect x="42" y="296" width="17" height="2"/><rect x="42" y="294" width="2" height="6"/>
<rect x="65" y="296" width="17" height="2"/><rect x="80" y="294" width="2" height="6"/>
<rect x="88" y="296" width="17" height="2"/><rect x="88" y="294" width="2" height="6"/><rect x="103" y="294" width="2" height="6"/></g>
<g shape-rendering="crispEdges"><rect x="113.5" y="286.5" width="4" height="11" fill="url(#gpause)" stroke="#3c3c3c"/><rect x="120.5" y="286.5" width="4" height="11" fill="url(#gpause)" stroke="#3c3c3c"/>
<rect x="136.5" y="286.5" width="11" height="11" fill="url(#gstop)" stroke="#3a1414"/></g>
<g shape-rendering="crispEdges"><rect x="366" y="256" width="23" height="22" fill="#5a8bd4"/><rect x="366.5" y="256.5" width="22" height="21" fill="none" stroke="#3f76c8"/><rect x="369" y="259" width="16" height="16" fill="#fff"/></g>
<path d="M375 260.5 H383.5 V269 L380.6 266.1 L372.8 273.9 L370.1 271.2 L377.9 263.4 Z" fill="#28a8f0" stroke="#0a2a50" stroke-width="1" stroke-linejoin="miter"/>
<g shape-rendering="crispEdges"><rect x="393.5" y="260.5" width="13" height="13" fill="#a8c8d8" stroke="#000"/><rect x="395.5" y="262.5" width="9" height="9" fill="url(#ggrn)" stroke="#0a3a0a"/>
<rect x="416.5" y="260.5" width="13" height="13" fill="#a8c8d8" stroke="#000"/><rect x="418.5" y="262.5" width="9" height="9" fill="url(#gred)" stroke="#4a0a0a"/></g>
<polygon points="439.5,273.5 451.5,273.5 451.5,261.5" fill="#00a818" stroke="#003800" stroke-width="1"/>
<path d="M444 259.5 L448.5 264 L446 264 L446 269.5 L442 269.5 L442 264 L439.5 264 Z" fill="url(#gblue)" stroke="#0a3a78" stroke-width="1" stroke-linejoin="round"/>
<polygon points="462.5,261.5 462.5,273.5 474.5,273.5" fill="#00a818" stroke="#003800" stroke-width="1"/>
<path d="M468.5 259.5 H472.5 V265 H475 L470.5 269.5 L466 265 H468.5 Z" fill="url(#gblue)" stroke="#0a3a78" stroke-width="1" stroke-linejoin="round"/>
<rect x="489" y="258" width="18" height="18" fill="#fff"/>
<rect x="495.5" y="259.5" width="5" height="14" fill="#c8c8c8" stroke="#5a5a5a" stroke-width="1"/>
<polygon points="490.5,261.5 496.5,266.5 490.5,271.5" fill="#28d838" stroke="#0a6a14" stroke-width="1"/>
<polygon points="505.5,261.5 499.5,266.5 505.5,271.5" fill="#28d838" stroke="#0a6a14" stroke-width="1"/>
<rect x="513" y="258" width="17" height="18" fill="#fff"/>
<path d="M518 259.5 H525 V261.5 H523 V271.5 H525 V273.5 H518 V271.5 H520 V261.5 H518 Z" fill="#d8d8d8" stroke="#4a4a4a" stroke-width="1"/>
<polygon points="519.5,261 513.5,266.5 519.5,272" fill="#28d838" stroke="#0a6a14" stroke-width="1"/>
<polygon points="523.5,261 529.5,266.5 523.5,272" fill="#28d838" stroke="#0a6a14" stroke-width="1"/>
<path d="M373.5 285.5 L377 293 M380.5 285.5 L377 293" stroke="#5a6a7a" stroke-width="1.6" fill="none" stroke-linecap="round"/>
<ellipse cx="374.2" cy="295.5" rx="1.8" ry="2.3" fill="none" stroke="#2848b8" stroke-width="1.5"/><ellipse cx="379.8" cy="295.5" rx="1.8" ry="2.3" fill="none" stroke="#2848b8" stroke-width="1.5"/>
<g shape-rendering="crispEdges"><rect x="392.5" y="285.5" width="8" height="9" fill="#e4eefc" stroke="#8aa8d8"/><rect x="394" y="288" width="5" height="1" fill="#6a8ac8"/><rect x="394" y="290" width="5" height="1" fill="#6a8ac8"/><rect x="394" y="292" width="5" height="1" fill="#6a8ac8"/>
<rect x="398.5" y="288.5" width="8" height="9" fill="#dce8fa" stroke="#3a5aa8"/><rect x="400" y="291" width="5" height="1" fill="#4a6ab8"/><rect x="400" y="293" width="5" height="1" fill="#4a6ab8"/><rect x="400" y="295" width="5" height="1" fill="#4a6ab8"/></g>
<rect x="415.5" y="285.5" width="11" height="13" rx="1" fill="#c8d4f0" stroke="#283868" stroke-width="1"/><rect x="418.5" y="284.5" width="5" height="3" rx="1" fill="#e8e8e8" stroke="#484848" stroke-width="1"/>
<g shape-rendering="crispEdges"><rect x="417" y="289" width="7" height="1" fill="#3a4a98"/><rect x="417" y="291" width="5" height="1" fill="#3a4a98"/><rect x="417" y="293" width="4" height="1" fill="#3a4a98"/><rect x="417" y="295" width="5" height="1" fill="#3a4a98"/></g>
<path d="M421.5 291.5 H425.5 V289.5 L429.5 293 L425.5 296.5 V294.5 H421.5 Z" fill="#38d838" stroke="#0a5a14" stroke-width="1" stroke-linejoin="round"/>
<rect x="453" y="284" width="17" height="17" fill="#fff"/>
<path d="M454.8 290.5 L460 286.3 L460 289 L464 289 Q467.5 289 467.5 292.5 L467.5 297.5 L464.2 297.5 L464.2 293 Q464.2 292.2 463.4 292.2 L460 292.2 L460 294.8 Z" fill="#38d028" stroke="#0a5a0a" stroke-width="1" stroke-linejoin="round"/>
<rect x="476" y="284" width="16" height="17" fill="#e6e6e6"/>
<path d="M490.2 290.5 L485 286.3 L485 289 L481 289 Q477.5 289 477.5 292.5 L477.5 297.5 L480.8 297.5 L480.8 293 Q480.8 292.2 481.6 292.2 L485 292.2 L485 294.8 Z" fill="#c0c0c0" stroke="#909090" stroke-width="1" stroke-linejoin="round"/>
<circle cx="507" cy="292" r="6.4" fill="#fff" stroke="#2a58c8" stroke-width="1"/><circle cx="507" cy="292" r="5.1" fill="url(#ghelp)"/>
<text x="507" y="295.6" font-family="Liberation Sans,sans-serif" font-size="9.5" font-weight="bold" fill="#fff" text-anchor="middle">?</text>
</svg>
<div class="a" style="left:120px;top:311px;width:640px;height:24px;background:#f0ee7b"></div>
<svg class="a" style="left:120px;top:311px" width="640" height="64" viewBox="120 311 640 64" shape-rendering="crispEdges" id="tl">
<rect x="125" y="330" width="1" height="3" fill="#808080"/>
<rect x="133" y="330" width="1" height="3" fill="#808080"/>
<rect x="142" y="330" width="1" height="3" fill="#808080"/>
<rect x="150" y="330" width="1" height="3" fill="#808080"/>
<rect x="158" y="330" width="1" height="3" fill="#808080"/>
<rect x="166" y="330" width="1" height="3" fill="#808080"/>
<rect x="175" y="330" width="1" height="3" fill="#808080"/>
<rect x="183" y="330" width="1" height="3" fill="#808080"/>
<rect x="191" y="330" width="1" height="3" fill="#808080"/>
<rect x="198" y="328" width="3" height="4" fill="#000"/><rect x="199" y="332" width="1" height="3" fill="#000"/>
<rect x="208" y="330" width="1" height="3" fill="#808080"/>
<rect x="216" y="330" width="1" height="3" fill="#808080"/>
<rect x="224" y="330" width="1" height="3" fill="#808080"/>
<rect x="232" y="330" width="1" height="3" fill="#808080"/>
<rect x="240" y="330" width="1" height="3" fill="#808080"/>
<rect x="249" y="330" width="1" height="3" fill="#808080"/>
<rect x="257" y="330" width="1" height="3" fill="#808080"/>
<rect x="265" y="330" width="1" height="3" fill="#808080"/>
<rect x="273" y="330" width="1" height="3" fill="#808080"/>
<rect x="281" y="328" width="3" height="4" fill="#000"/><rect x="282" y="332" width="1" height="3" fill="#000"/>
<rect x="290" y="330" width="1" height="3" fill="#808080"/>
<rect x="298" y="330" width="1" height="3" fill="#808080"/>
<rect x="306" y="330" width="1" height="3" fill="#808080"/>
<rect x="315" y="330" width="1" height="3" fill="#808080"/>
<rect x="323" y="330" width="1" height="3" fill="#808080"/>
<rect x="331" y="330" width="1" height="3" fill="#808080"/>
<rect x="339" y="330" width="1" height="3" fill="#808080"/>
<rect x="348" y="330" width="1" height="3" fill="#808080"/>
<rect x="356" y="330" width="1" height="3" fill="#808080"/>
<rect x="363" y="328" width="3" height="4" fill="#000"/><rect x="364" y="332" width="1" height="3" fill="#000"/>
<rect x="372" y="330" width="1" height="3" fill="#808080"/>
<rect x="381" y="330" width="1" height="3" fill="#808080"/>
<rect x="389" y="330" width="1" height="3" fill="#808080"/>
<rect x="397" y="330" width="1" height="3" fill="#808080"/>
<rect x="405" y="330" width="1" height="3" fill="#808080"/>
<rect x="414" y="330" width="1" height="3" fill="#808080"/>
<rect x="422" y="330" width="1" height="3" fill="#808080"/>
<rect x="430" y="330" width="1" height="3" fill="#808080"/>
<rect x="438" y="330" width="1" height="3" fill="#808080"/>
<rect x="446" y="328" width="3" height="4" fill="#000"/><rect x="447" y="332" width="1" height="3" fill="#000"/>
<rect x="455" y="330" width="1" height="3" fill="#808080"/>
<rect x="463" y="330" width="1" height="3" fill="#808080"/>
<rect x="471" y="330" width="1" height="3" fill="#808080"/>
<rect x="480" y="330" width="1" height="3" fill="#808080"/>
<rect x="488" y="330" width="1" height="3" fill="#808080"/>
<rect x="496" y="330" width="1" height="3" fill="#808080"/>
<rect x="504" y="330" width="1" height="3" fill="#808080"/>
<rect x="513" y="330" width="1" height="3" fill="#808080"/>
<rect x="521" y="330" width="1" height="3" fill="#808080"/>
<rect x="528" y="328" width="3" height="4" fill="#000"/><rect x="529" y="332" width="1" height="3" fill="#000"/>
<rect x="537" y="330" width="1" height="3" fill="#808080"/>
<rect x="546" y="330" width="1" height="3" fill="#808080"/>
<rect x="554" y="330" width="1" height="3" fill="#808080"/>
<rect x="562" y="330" width="1" height="3" fill="#808080"/>
<rect x="570" y="330" width="1" height="3" fill="#808080"/>
<rect x="579" y="330" width="1" height="3" fill="#808080"/>
<rect x="587" y="330" width="1" height="3" fill="#808080"/>
<rect x="595" y="330" width="1" height="3" fill="#808080"/>
<rect x="603" y="330" width="1" height="3" fill="#808080"/>
<rect x="611" y="328" width="3" height="4" fill="#000"/><rect x="612" y="332" width="1" height="3" fill="#000"/>
<rect x="620" y="330" width="1" height="3" fill="#808080"/>
<rect x="628" y="330" width="1" height="3" fill="#808080"/>
<rect x="636" y="330" width="1" height="3" fill="#808080"/>
<rect x="645" y="330" width="1" height="3" fill="#808080"/>
<rect x="653" y="330" width="1" height="3" fill="#808080"/>
<rect x="661" y="330" width="1" height="3" fill="#808080"/>
<rect x="669" y="330" width="1" height="3" fill="#808080"/>
<rect x="678" y="330" width="1" height="3" fill="#808080"/>
<rect x="686" y="330" width="1" height="3" fill="#808080"/>
<rect x="693" y="328" width="3" height="4" fill="#000"/><rect x="694" y="332" width="1" height="3" fill="#000"/>
<rect x="702" y="330" width="1" height="3" fill="#808080"/>
<rect x="711" y="330" width="1" height="3" fill="#808080"/>
<rect x="719" y="330" width="1" height="3" fill="#808080"/>
<rect x="727" y="330" width="1" height="3" fill="#808080"/>
<rect x="735" y="330" width="1" height="3" fill="#808080"/>
<rect x="744" y="330" width="1" height="3" fill="#808080"/>
<rect x="752" y="330" width="1" height="3" fill="#808080"/>
<path d="M120.5 350V362M121.5 348V362M122.5 347V360M123.5 349V359M124.5 342V361M125.5 351V368M126.5 349V362M127.5 348V360M128.5 351V360M129.5 350V358M130.5 350V363M131.5 349V361M132.5 348V359M133.5 352V358M134.5 351V359M135.5 351V361M136.5 350V361M137.5 351V358M138.5 352V358M139.5 352V358M140.5 352V359M141.5 352V359M142.5 352V357M143.5 353V357M144.5 352V357M145.5 353V359M146.5 352V360M147.5 351V358M148.5 353V358M149.5 353V357M150.5 352V359M151.5 352V359M152.5 351V358M153.5 353V357M154.5 353V357M155.5 353V360M156.5 351V359M157.5 351V358M158.5 352V358M159.5 353V357M160.5 352V359M161.5 351V360M162.5 351V357M163.5 352V358M164.5 353V357M165.5 353V360M166.5 350V360M167.5 351V358M168.5 351V358M169.5 351V359M170.5 353V361M171.5 350V361M172.5 350V359M173.5 352V359M174.5 352V360M175.5 351V361M176.5 349V361M177.5 349V360M178.5 352V359M179.5 351V358M180.5 351V362M181.5 349V362M182.5 350V359M183.5 352V360M184.5 350V360M185.5 352V361M186.5 348V363M187.5 350V359M188.5 352V360M189.5 350V358M190.5 351V362M191.5 349V363M192.5 349V359M193.5 351V360M194.5 351V359M195.5 348V365M196.5 346V365M197.5 346V361M198.5 348V363M199.5 349V361M200.5 350V367M201.5 346V368M202.5 344V360M203.5 350V361M204.5 350V360M205.5 348V366M206.5 346V367M207.5 345V360M208.5 350V361M209.5 349V361M210.5 348V366M211.5 344V364M212.5 346V361M213.5 348V361M214.5 350V361M215.5 349V365M216.5 346V368M217.5 346V362M218.5 349V360M219.5 347V362M220.5 348V367M221.5 345V364M222.5 346V360M223.5 349V360M224.5 350V362M225.5 350V366M226.5 346V365M227.5 345V362M228.5 350V361M229.5 351V360M230.5 349V364M231.5 347V364M232.5 349V360M233.5 351V360M234.5 352V360M235.5 352V360M236.5 351V360M237.5 351V358M238.5 351V358M239.5 351V359M240.5 351V363M241.5 348V365M242.5 348V361M243.5 351V360M244.5 349V360M245.5 350V366M246.5 347V365M247.5 344V363M248.5 350V360M249.5 349V363M250.5 347V368M251.5 345V365M252.5 344V362M253.5 348V363M254.5 348V360M255.5 348V365M256.5 345V368M257.5 347V360M258.5 350V361M259.5 350V361M260.5 348V364M261.5 346V364M262.5 346V362M263.5 349V359M264.5 350V359M265.5 352V363M266.5 349V361M267.5 350V359M268.5 352V358M269.5 352V360M270.5 350V362M271.5 347V363M272.5 349V359M273.5 351V361M274.5 349V361M275.5 349V363M276.5 348V363M277.5 346V361M278.5 350V361M279.5 351V362M280.5 349V366M281.5 346V366M282.5 348V361M283.5 350V362M284.5 348V362M285.5 348V364M286.5 345V363M287.5 345V362M288.5 350V362M289.5 350V360M290.5 349V364M291.5 348V364M292.5 347V362M293.5 348V360M294.5 349V360M295.5 348V365M296.5 346V363M297.5 345V360M298.5 348V360M299.5 351V360M300.5 349V363M301.5 348V363M302.5 349V359M303.5 352V359M304.5 353V359M305.5 352V361M306.5 350V360M307.5 351V357M308.5 352V358M309.5 353V358M310.5 352V359M311.5 351V359M312.5 351V357M313.5 353V358M314.5 352V358M315.5 352V360M316.5 351V360M317.5 352V358M318.5 352V358M319.5 351V359M320.5 350V362M321.5 346V367M322.5 345V360M323.5 350V361M324.5 349V361M325.5 348V367M326.5 345V365M327.5 346V360M328.5 349V362M329.5 347V360M330.5 349V368M331.5 345V368M332.5 344V361M333.5 347V360M334.5 347V363M335.5 350V367M336.5 346V369M337.5 344V360M338.5 349V363M339.5 349V363M340.5 348V369M341.5 345V369M342.5 344V362M343.5 348V362M344.5 348V362M345.5 347V367M346.5 345V365M347.5 346V362M348.5 348V361M349.5 348V361M350.5 350V365M351.5 346V365M352.5 345V360M353.5 350V362M354.5 348V360M355.5 349V366M356.5 346V364M357.5 346V363M358.5 349V362M359.5 348V362M360.5 349V363M361.5 346V367M362.5 345V362M363.5 349V362M364.5 349V361M365.5 350V364M366.5 347V363M367.5 347V361M368.5 350V360M369.5 350V360M370.5 349V363M371.5 347V365M372.5 348V361M373.5 351V360M374.5 351V360M375.5 351V362M376.5 348V362M377.5 348V360M378.5 352V358M379.5 352V359M380.5 351V360M381.5 350V361M382.5 350V359M383.5 351V358M384.5 353V358M385.5 353V360M386.5 351V359M387.5 351V358M388.5 353V358M389.5 352V357M390.5 352V360M391.5 352V358M392.5 352V358M393.5 352V357M394.5 352V357M395.5 352V359M396.5 352V360M397.5 351V358M398.5 353V358M399.5 351V358M400.5 351V362M401.5 347V364M402.5 344V362M403.5 350V363M404.5 348V363M405.5 348V366M406.5 344V369M407.5 345V363M408.5 348V362M409.5 348V363M410.5 349V369M411.5 343V366M412.5 342V361M413.5 348V363M414.5 348V361M415.5 346V367M416.5 344V370M417.5 344V364M418.5 347V362M419.5 350V364M420.5 349V369M421.5 344V369M422.5 343V363M423.5 348V364M424.5 349V361M425.5 347V367M426.5 343V368M427.5 344V362M428.5 347V362M429.5 347V361M430.5 349V366M431.5 345V366M432.5 344V363M433.5 349V361M434.5 348V363M435.5 346V368M436.5 344V366M437.5 345V361M438.5 349V361M439.5 348V362M440.5 346V368M441.5 343V366M442.5 342V363M443.5 346V363M444.5 348V362M445.5 349V366M446.5 341V368M447.5 342V362M448.5 349V363M449.5 349V361M450.5 348V367M451.5 342V366M452.5 343V363M453.5 347V361M454.5 348V362M455.5 348V369M456.5 343V366M457.5 344V362M458.5 348V363M459.5 350V361M460.5 348V364M461.5 347V364M462.5 347V361M463.5 349V360M464.5 350V361M465.5 349V364M466.5 346V366M467.5 346V361M468.5 350V361M469.5 350V360M470.5 350V364M471.5 348V361M472.5 349V359M473.5 351V359M474.5 352V358M475.5 351V362M476.5 349V361M477.5 350V358M478.5 353V358M479.5 352V358M480.5 353V361M481.5 350V360M482.5 350V359M483.5 352V358M484.5 353V358M485.5 352V360M486.5 350V359M487.5 351V358M488.5 351V358M489.5 351V359M490.5 349V365M491.5 347V365M492.5 347V362M493.5 349V361M494.5 349V360M495.5 350V367M496.5 346V366M497.5 344V362M498.5 349V361M499.5 350V361M500.5 348V367M501.5 344V365M502.5 345V363M503.5 349V362M504.5 350V363M505.5 348V365M506.5 346V366M507.5 345V360M508.5 347V363M509.5 349V360M510.5 348V366M511.5 345V366M512.5 346V362M513.5 347V360M514.5 349V361M515.5 348V366M516.5 345V366M517.5 348V361M518.5 350V361M519.5 351V360M520.5 351V361M521.5 349V362M522.5 349V358M523.5 351V359M524.5 351V359M525.5 351V361M526.5 350V362M527.5 348V359M528.5 349V359M529.5 349V361M530.5 348V366M531.5 345V367M532.5 344V361M533.5 350V361M534.5 348V363M535.5 347V366M536.5 345V366M537.5 344V361M538.5 348V360M539.5 349V363M540.5 349V367M541.5 344V368M542.5 344V363M543.5 349V361M544.5 348V363M545.5 347V364M546.5 347V366M547.5 345V362M548.5 349V360M549.5 352V360M550.5 350V362M551.5 349V363M552.5 350V359M553.5 352V359M554.5 352V359M555.5 351V362M556.5 350V360M557.5 349V359M558.5 352V359M559.5 352V358M560.5 352V360M561.5 351V361M562.5 350V358M563.5 353V358M564.5 352V358M565.5 352V360M566.5 351V361M567.5 351V358M568.5 351V359M569.5 350V360M570.5 347V365M571.5 343V367M572.5 346V362M573.5 348V363M574.5 350V362M575.5 348V369M576.5 345V369M577.5 343V362M578.5 347V363M579.5 347V364M580.5 347V370M581.5 343V371M582.5 343V362M583.5 348V363M584.5 347V361M585.5 348V369M586.5 345V366M587.5 343V364M588.5 348V364M589.5 346V361M590.5 347V368M591.5 343V369M592.5 344V361M593.5 346V361M594.5 346V364M595.5 347V370M596.5 342V369M597.5 344V363M598.5 350V362M599.5 348V363M600.5 347V368M601.5 343V370M602.5 345V361M603.5 350V364M604.5 348V364M605.5 349V365M606.5 343V370M607.5 345V362M608.5 349V364M609.5 349V362M610.5 349V369M611.5 346V367M612.5 344V363M613.5 347V361M614.5 348V360M615.5 349V364M616.5 346V365M617.5 344V360M618.5 350V361M619.5 348V362M620.5 351V365M621.5 347V366M622.5 348V360M623.5 351V359M624.5 350V360M625.5 350V363M626.5 348V361M627.5 348V359M628.5 352V359M629.5 352V359M630.5 352V361M631.5 349V361M632.5 350V359M633.5 352V359M634.5 352V358M635.5 352V360M636.5 350V360M637.5 351V359M638.5 352V358M639.5 353V357M640.5 352V360M641.5 351V360M642.5 351V358M643.5 353V358M644.5 352V357M645.5 352V360M646.5 351V359M647.5 351V357M648.5 353V357M649.5 352V357M650.5 352V358M651.5 350V361M652.5 349V359M653.5 349V361M654.5 350V363M655.5 349V365M656.5 345V364M657.5 345V362M658.5 348V362M659.5 348V361M660.5 349V365M661.5 345V366M662.5 345V360M663.5 348V363M664.5 349V361M665.5 346V365M666.5 343V365M667.5 346V363M668.5 347V362M669.5 348V362M670.5 349V365M671.5 345V368M672.5 344V363M673.5 348V363M674.5 348V361M675.5 348V365M676.5 344V365M677.5 346V363M678.5 349V362M679.5 348V363M680.5 348V368M681.5 344V367M682.5 345V360M683.5 347V363M684.5 349V361M685.5 348V366M686.5 345V364M687.5 343V362M688.5 349V361M689.5 348V360M690.5 347V366M691.5 344V367M692.5 344V363M693.5 347V363M694.5 349V361M695.5 349V370M696.5 342V367M697.5 343V363M698.5 348V361M699.5 347V361M700.5 349V366M701.5 344V366M702.5 345V360M703.5 349V361M704.5 351V360M705.5 350V363M706.5 348V363M707.5 349V360M708.5 351V359M709.5 350V359M710.5 350V363M711.5 350V363M712.5 350V358M713.5 350V360M714.5 351V359M715.5 351V361M716.5 350V360M717.5 350V359M718.5 351V359M719.5 351V358M720.5 351V360M721.5 350V361M722.5 351V358M723.5 352V358M724.5 353V358M725.5 353V360M726.5 350V360M727.5 348V360M728.5 349V360M729.5 350V360M730.5 348V367M731.5 344V365M732.5 344V362M733.5 347V363M734.5 348V364M735.5 348V368M736.5 343V369M737.5 343V361M738.5 349V362M739.5 348V362M740.5 349V368M741.5 344V368M742.5 345V364M743.5 349V364M744.5 346V363M745.5 347V368M746.5 343V370M747.5 342V363M748.5 346V363M749.5 348V363M750.5 349V366M751.5 345V371M752.5 344V364M753.5 347V361M754.5 348V363M755.5 348V369M756.5 345V368M757.5 344V362M758.5 348V363M759.5 346V363" stroke="#0000ff" stroke-width="1" fill="none"/>
</svg>
<div class="a" style="left:120px;top:311px;width:640px;height:24px;overflow:hidden">
<div class="t" style="left:54.35px;top:1px;font-size:14px;letter-spacing:0.367px;">0:03.50</div>
<div class="t" style="left:136.85px;top:1px;font-size:14px;letter-spacing:0.367px;">0:04.00</div>
<div class="t" style="left:219.35px;top:1px;font-size:14px;letter-spacing:0.367px;">0:04.50</div>
<div class="t" style="left:301.85px;top:1px;font-size:14px;letter-spacing:0.367px;">0:05.00</div>
<div class="t" style="left:384.35px;top:1px;font-size:14px;letter-spacing:0.367px;">0:05.50</div>
<div class="t" style="left:466.85px;top:1px;font-size:14px;letter-spacing:0.367px;">0:06.00</div>
<div class="t" style="left:549.35px;top:1px;font-size:14px;letter-spacing:0.367px;">0:06.50</div>
<div class="t" style="left:631.85px;top:1px;font-size:14px;letter-spacing:0.367px;">0:07.00</div>
</div>
<div class="a" style="left:17px;top:375px;width:99px;height:222px;background:#fff;border-top:1px solid #9a9a9a;border-left:1px solid #c9cfdc;border-bottom:1px solid #dfe5ef"></div>
<div class="a" style="left:17px;top:415px;width:99px;height:1px;background:#808080"></div>
<div class="a" style="left:17px;top:455px;width:99px;height:1px;background:#808080"></div>
<div class="a" style="left:17px;top:495px;width:99px;height:1px;background:#808080"></div>
<div class="a" style="left:17px;top:535px;width:99px;height:1px;background:#808080"></div>
<div class="a" style="left:17px;top:575px;width:99px;height:1px;background:#808080"></div>
<div class="t" style="left:18.80px;top:379px;font-size:12px;letter-spacing:0.200px;">16x50 tree</div>
<div class="t" style="left:18.80px;top:419px;font-size:12px;letter-spacing:0.200px;">32x50 tree</div>
<div class="t" style="left:19.30px;top:459px;font-size:12px;letter-spacing:-0.175px;">Arch1</div>
<div class="t" style="left:18.30px;top:499px;font-size:12px;letter-spacing:0.157px;">CCR TREE</div>
<div class="t" style="left:18.80px;top:539px;font-size:12px;letter-spacing:0.127px;">Matrix 16x50</div>
<div class="a" style="left:116px;top:311px;width:4px;height:308px;background:#a0a0a0"></div>
<div class="a" style="left:17px;top:356px;width:73px;height:18px;border:1px solid #707070;border-radius:3px;background:linear-gradient(#f2f2f2 0,#ebebeb 48%,#dddddd 52%,#cfcfcf 100%);box-shadow:inset 0 0 0 1px #fcfcfc"></div>
<div class="t" style="left:39.40px;top:360px;font-size:11px;letter-spacing:-0.250px;">Props</div><svg class="a" style="left:120px;top:375px" width="640" height="224" viewBox="120 375 640 224" shape-rendering="crispEdges" id="grid">
<rect x="120" y="375" width="640" height="224" fill="#000"/>
<polygon points="120.00,395.00 120.00,376.00 166.25,376.00 166.25,395.00" fill="#ffffff"/>
<rect x="120.00" y="395" width="46.25" height="1" fill="#ffffff"/>
<polygon points="166.25,395.00 166.25,376.00 281.75,395.00 281.75,395.00" fill="#ffffff"/>
<rect x="166.25" y="395" width="112.50" height="1" fill="#ffffff"/>
<polygon points="677.75,395.00 677.75,395.00 735.50,376.00 735.50,395.00" fill="#cccccc"/>
<rect x="680.75" y="395" width="54.75" height="1" fill="#cccccc"/>
<polygon points="735.50,395.00 735.50,376.00 760.00,376.00 760.00,395.00" fill="#cccccc"/>
<rect x="735.50" y="395" width="24.50" height="1" fill="#cccccc"/>
<polygon points="166.25,415.00 166.25,415.00 281.75,396.00 281.75,415.00" fill="#ffffff"/>
<polygon points="281.75,415.00 281.75,396.00 677.75,396.00 677.75,415.00" fill="#ffffff"/>
<polygon points="677.75,415.00 677.75,396.00 735.50,415.00 735.50,415.00" fill="#ffffff"/>
<polygon points="166.25,435.00 166.25,435.00 281.75,416.00 281.75,435.00" fill="#ffffff"/>
<rect x="169.25" y="435" width="112.50" height="1" fill="#ffffff"/>
<polygon points="281.75,435.00 281.75,416.00 504.50,416.00 504.50,435.00" fill="#ffffff"/>
<rect x="281.75" y="435" width="222.75" height="1" fill="#ffffff"/>
<polygon points="504.50,435.00 504.50,416.00 545.75,435.00 545.75,435.00" fill="#ffffff"/>
<rect x="504.50" y="435" width="38.25" height="1" fill="#ffffff"/>
<polygon points="120.00,455.00 120.00,436.00 191.00,436.00 191.00,455.00" fill="#ffffff"/>
<polygon points="191.00,455.00 191.00,436.00 232.25,455.00 232.25,455.00" fill="#ffffff"/>
<polygon points="504.50,455.00 504.50,455.00 545.75,436.00 545.75,455.00" fill="#cccccc"/>
<polygon points="545.75,455.00 545.75,436.00 760.00,436.00 760.00,455.00" fill="#cccccc"/>
<polygon points="120.00,475.00 120.00,456.00 191.00,456.00 191.00,475.00" fill="#ffffff"/>
<rect x="120.00" y="475" width="71.00" height="1" fill="#ffffff"/>
<polygon points="191.00,475.00 191.00,456.00 232.25,475.00 232.25,475.00" fill="#ffffff"/>
<rect x="191.00" y="475" width="38.25" height="1" fill="#ffffff"/>
<polygon points="504.50,475.00 504.50,475.00 545.75,456.00 545.75,475.00" fill="#ffffff"/>
<rect x="507.50" y="475" width="38.25" height="1" fill="#ffffff"/>
<polygon points="545.75,475.00 545.75,456.00 760.00,456.00 760.00,475.00" fill="#ffffff"/>
<rect x="545.75" y="475" width="214.25" height="1" fill="#ffffff"/>
<polygon points="438.50,495.00 438.50,476.00 471.50,476.00 471.50,495.00" fill="#ffffff"/>
<polygon points="120.00,515.00 120.00,496.00 232.25,496.00 232.25,515.00" fill="#ffffff"/>
<rect x="120.00" y="515" width="112.25" height="1" fill="#ffffff"/>
<polygon points="232.25,515.00 232.25,496.00 265.25,496.00 265.25,515.00" fill="#cccccc"/>
<rect x="232.25" y="515" width="33.00" height="1" fill="#cccccc"/>
<polygon points="265.25,515.00 265.25,496.00 438.50,496.00 438.50,515.00" fill="#ffffff"/>
<rect x="265.25" y="515" width="173.25" height="1" fill="#ffffff"/>
<polygon points="438.50,515.00 438.50,496.00 471.50,496.00 471.50,515.00" fill="#cccccc"/>
<rect x="438.50" y="515" width="33.00" height="1" fill="#cccccc"/>
<polygon points="471.50,515.00 471.50,496.00 554.00,496.00 554.00,515.00" fill="#ffffff"/>
<rect x="471.50" y="515" width="82.50" height="1" fill="#ffffff"/>
<polygon points="554.00,515.00 554.00,496.00 760.00,496.00 760.00,515.00" fill="#cccccc"/>
<rect x="554.00" y="515" width="206.00" height="1" fill="#cccccc"/>
<polygon points="120.00,555.00 120.00,536.00 166.25,536.00 166.25,555.00" fill="#ffffff"/>
<rect x="120.00" y="555" width="46.25" height="1" fill="#ffffff"/>
<polygon points="166.25,555.00 166.25,536.00 275.15,555.00 275.15,555.00" fill="#ffffff"/>
<rect x="166.25" y="555" width="105.90" height="1" fill="#ffffff"/>
<polygon points="471.50,555.00 471.50,555.00 529.25,536.00 529.25,555.00" fill="#ffffff"/>
<rect x="474.50" y="555" width="54.75" height="1" fill="#ffffff"/>
<polygon points="529.25,555.00 529.25,536.00 554.00,536.00 554.00,555.00" fill="#ffffff"/>
<rect x="529.25" y="555" width="24.75" height="1" fill="#ffffff"/>
<polygon points="554.00,555.00 554.00,536.00 760.00,536.00 760.00,555.00" fill="#cccccc"/>
<rect x="554.00" y="555" width="206.00" height="1" fill="#cccccc"/>
<polygon points="166.25,575.00 166.25,575.00 275.15,556.00 275.15,575.00" fill="#ffffff"/>
<polygon points="275.15,575.00 275.15,556.00 471.50,556.00 471.50,575.00" fill="#ffffff"/>
<polygon points="471.50,575.00 471.50,556.00 529.25,575.00 529.25,575.00" fill="#ffffff"/>
<path d="M122 395.5h3M130 395.5h3M139 395.5h3M147 395.5h3M155 395.5h3M163 395.5h3M172 395.5h3M180 395.5h3M188 395.5h3M196 395.5h3M205 395.5h3M213 395.5h3M221 395.5h3M229 395.5h3M237 395.5h3M246 395.5h3M254 395.5h3M262 395.5h3M270 395.5h3M279 395.5h3M287 395.5h3M295 395.5h3M303 395.5h3M312 395.5h3M320 395.5h3M328 395.5h3M336 395.5h3M345 395.5h3M353 395.5h3M361 395.5h3M369 395.5h3M378 395.5h3M386 395.5h3M394 395.5h3M402 395.5h3M411 395.5h3M419 395.5h3M427 395.5h3M435 395.5h3M444 395.5h3M452 395.5h3M460 395.5h3M468 395.5h3M477 395.5h3M485 395.5h3M493 395.5h3M501 395.5h3M510 395.5h3M518 395.5h3M526 395.5h3M534 395.5h3M543 395.5h3M551 395.5h3M559 395.5h3M567 395.5h3M576 395.5h3M584 395.5h3M592 395.5h3M600 395.5h3M609 395.5h3M617 395.5h3M625 395.5h3M633 395.5h3M642 395.5h3M650 395.5h3M658 395.5h3M666 395.5h3M675 395.5h3M683 395.5h3M691 395.5h3M699 395.5h3M708 395.5h3M716 395.5h3M724 395.5h3M732 395.5h3M741 395.5h3M749 395.5h3M757 395.5h3" stroke="#808080" stroke-width="1" fill="none"/>
<path d="M122 435.5h3M130 435.5h3M139 435.5h3M147 435.5h3M155 435.5h3M163 435.5h3M172 435.5h3M180 435.5h3M188 435.5h3M196 435.5h3M205 435.5h3M213 435.5h3M221 435.5h3M229 435.5h3M237 435.5h3M246 435.5h3M254 435.5h3M262 435.5h3M270 435.5h3M279 435.5h3M287 435.5h3M295 435.5h3M303 435.5h3M312 435.5h3M320 435.5h3M328 435.5h3M336 435.5h3M345 435.5h3M353 435.5h3M361 435.5h3M369 435.5h3M378 435.5h3M386 435.5h3M394 435.5h3M402 435.5h3M411 435.5h3M419 435.5h3M427 435.5h3M435 435.5h3M444 435.5h3M452 435.5h3M460 435.5h3M468 435.5h3M477 435.5h3M485 435.5h3M493 435.5h3M501 435.5h3M510 435.5h3M518 435.5h3M526 435.5h3M534 435.5h3M543 435.5h3M551 435.5h3M559 435.5h3M567 435.5h3M576 435.5h3M584 435.5h3M592 435.5h3M600 435.5h3M609 435.5h3M617 435.5h3M625 435.5h3M633 435.5h3M642 435.5h3M650 435.5h3M658 435.5h3M666 435.5h3M675 435.5h3M683 435.5h3M691 435.5h3M699 435.5h3M708 435.5h3M716 435.5h3M724 435.5h3M732 435.5h3M741 435.5h3M749 435.5h3M757 435.5h3" stroke="#808080" stroke-width="1" fill="none"/>
<path d="M122 475.5h3M130 475.5h3M139 475.5h3M147 475.5h3M155 475.5h3M163 475.5h3M172 475.5h3M180 475.5h3M188 475.5h3M196 475.5h3M205 475.5h3M213 475.5h3M221 475.5h3M229 475.5h3M237 475.5h3M246 475.5h3M254 475.5h3M262 475.5h3M270 475.5h3M279 475.5h3M287 475.5h3M295 475.5h3M303 475.5h3M312 475.5h3M320 475.5h3M328 475.5h3M336 475.5h3M345 475.5h3M353 475.5h3M361 475.5h3M369 475.5h3M378 475.5h3M386 475.5h3M394 475.5h3M402 475.5h3M411 475.5h3M419 475.5h3M427 475.5h3M435 475.5h3M444 475.5h3M452 475.5h3M460 475.5h3M468 475.5h3M477 475.5h3M485 475.5h3M493 475.5h3M501 475.5h3M510 475.5h3M518 475.5h3M526 475.5h3M534 475.5h3M543 475.5h3M551 475.5h3M559 475.5h3M567 475.5h3M576 475.5h3M584 475.5h3M592 475.5h3M600 475.5h3M609 475.5h3M617 475.5h3M625 475.5h3M633 475.5h3M642 475.5h3M650 475.5h3M658 475.5h3M666 475.5h3M675 475.5h3M683 475.5h3M691 475.5h3M699 475.5h3M708 475.5h3M716 475.5h3M724 475.5h3M732 475.5h3M741 475.5h3M749 475.5h3M757 475.5h3" stroke="#808080" stroke-width="1" fill="none"/>
<path d="M122 515.5h3M130 515.5h3M139 515.5h3M147 515.5h3M155 515.5h3M163 515.5h3M172 515.5h3M180 515.5h3M188 515.5h3M196 515.5h3M205 515.5h3M213 515.5h3M221 515.5h3M229 515.5h3M237 515.5h3M246 515.5h3M254 515.5h3M262 515.5h3M270 515.5h3M279 515.5h3M287 515.5h3M295 515.5h3M303 515.5h3M312 515.5h3M320 515.5h3M328 515.5h3M336 515.5h3M345 515.5h3M353 515.5h3M361 515.5h3M369 515.5h3M378 515.5h3M386 515.5h3M394 515.5h3M402 515.5h3M411 515.5h3M419 515.5h3M427 515.5h3M435 515.5h3M444 515.5h3M452 515.5h3M460 515.5h3M468 515.5h3M477 515.5h3M485 515.5h3M493 515.5h3M501 515.5h3M510 515.5h3M518 515.5h3M526 515.5h3M534 515.5h3M543 515.5h3M551 515.5h3M559 515.5h3M567 515.5h3M576 515.5h3M584 515.5h3M592 515.5h3M600 515.5h3M609 515.5h3M617 515.5h3M625 515.5h3M633 515.5h3M642 515.5h3M650 515.5h3M658 515.5h3M666 515.5h3M675 515.5h3M683 515.5h3M691 515.5h3M699 515.5h3M708 515.5h3M716 515.5h3M724 515.5h3M732 515.5h3M741 515.5h3M749 515.5h3M757 515.5h3" stroke="#808080" stroke-width="1" fill="none"/>
<path d="M122 555.5h3M130 555.5h3M139 555.5h3M147 555.5h3M155 555.5h3M163 555.5h3M172 555.5h3M180 555.5h3M188 555.5h3M196 555.5h3M205 555.5h3M213 555.5h3M221 555.5h3M229 555.5h3M237 555.5h3M246 555.5h3M254 555.5h3M262 555.5h3M270 555.5h3M279 555.5h3M287 555.5h3M295 555.5h3M303 555.5h3M312 555.5h3M320 555.5h3M328 555.5h3M336 555.5h3M345 555.5h3M353 555.5h3M361 555.5h3M369 555.5h3M378 555.5h3M386 555.5h3M394 555.5h3M402 555.5h3M411 555.5h3M419 555.5h3M427 555.5h3M435 555.5h3M444 555.5h3M452 555.5h3M460 555.5h3M468 555.5h3M477 555.5h3M485 555.5h3M493 555.5h3M501 555.5h3M510 555.5h3M518 555.5h3M526 555.5h3M534 555.5h3M543 555.5h3M551 555.5h3M559 555.5h3M567 555.5h3M576 555.5h3M584 555.5h3M592 555.5h3M600 555.5h3M609 555.5h3M617 555.5h3M625 555.5h3M633 555.5h3M642 555.5h3M650 555.5h3M658 555.5h3M666 555.5h3M675 555.5h3M683 555.5h3M691 555.5h3M699 555.5h3M708 555.5h3M716 555.5h3M724 555.5h3M732 555.5h3M741 555.5h3M749 555.5h3M757 555.5h3" stroke="#808080" stroke-width="1" fill="none"/>
<rect x="120" y="415" width="640" height="1" fill="#808080"/>
<rect x="120" y="455" width="640" height="1" fill="#808080"/>
<rect x="120" y="495" width="640" height="1" fill="#808080"/>
<rect x="120" y="535" width="640" height="1" fill="#808080"/>
<rect x="120" y="575" width="640" height="1" fill="#808080"/>
<rect x="125" y="375" width="1" height="224" fill="#808080"/>
<rect x="133" y="375" width="1" height="224" fill="#808080"/>
<rect x="142" y="375" width="1" height="224" fill="#808080"/>
<rect x="150" y="375" width="1" height="224" fill="#808080"/>
<rect x="158" y="375" width="1" height="224" fill="#808080"/>
<rect x="166" y="375" width="1" height="224" fill="#808080"/>
<rect x="175" y="375" width="1" height="224" fill="#808080"/>
<rect x="183" y="375" width="1" height="224" fill="#808080"/>
<rect x="191" y="375" width="1" height="224" fill="#808080"/>
<rect x="199" y="375" width="1" height="224" fill="#808080"/>
<rect x="208" y="375" width="1" height="224" fill="#808080"/>
<rect x="216" y="375" width="1" height="224" fill="#808080"/>
<rect x="224" y="375" width="1" height="224" fill="#808080"/>
<rect x="232" y="375" width="1" height="224" fill="#808080"/>
<rect x="240" y="375" width="1" height="224" fill="#808080"/>
<rect x="249" y="375" width="1" height="224" fill="#808080"/>
<rect x="257" y="375" width="1" height="224" fill="#808080"/>
<rect x="265" y="375" width="1" height="224" fill="#808080"/>
<rect x="273" y="375" width="1" height="224" fill="#808080"/>
<rect x="282" y="375" width="1" height="224" fill="#808080"/>
<rect x="290" y="375" width="1" height="224" fill="#808080"/>
<rect x="298" y="375" width="1" height="224" fill="#808080"/>
<rect x="306" y="375" width="1" height="224" fill="#808080"/>
<rect x="315" y="375" width="1" height="224" fill="#808080"/>
<rect x="323" y="375" width="1" height="224" fill="#808080"/>
<rect x="331" y="375" width="1" height="224" fill="#808080"/>
<rect x="339" y="375" width="1" height="224" fill="#808080"/>
<rect x="348" y="375" width="1" height="224" fill="#808080"/>
<rect x="356" y="375" width="1" height="224" fill="#808080"/>
<rect x="364" y="375" width="1" height="224" fill="#808080"/>
<rect x="372" y="375" width="1" height="224" fill="#808080"/>
<rect x="381" y="375" width="1" height="224" fill="#808080"/>
<rect x="389" y="375" width="1" height="224" fill="#808080"/>
<rect x="397" y="375" width="1" height="224" fill="#808080"/>
<rect x="405" y="375" width="1" height="224" fill="#808080"/>
<rect x="414" y="375" width="1" height="224" fill="#808080"/>
<rect x="422" y="375" width="1" height="224" fill="#808080"/>
<rect x="430" y="375" width="1" height="224" fill="#808080"/>
<rect x="438" y="375" width="1" height="224" fill="#808080"/>
<rect x="447" y="375" width="1" height="224" fill="#808080"/>
<rect x="455" y="375" width="1" height="224" fill="#808080"/>
<rect x="463" y="375" width="1" height="224" fill="#808080"/>
<rect x="471" y="375" width="1" height="224" fill="#808080"/>
<rect x="480" y="375" width="1" height="224" fill="#808080"/>
<rect x="488" y="375" width="1" height="224" fill="#808080"/>
<rect x="496" y="375" width="1" height="224" fill="#808080"/>
<rect x="504" y="375" width="1" height="224" fill="#808080"/>
<rect x="513" y="375" width="1" height="224" fill="#808080"/>
<rect x="521" y="375" width="1" height="224" fill="#808080"/>
<rect x="529" y="375" width="1" height="224" fill="#808080"/>
<rect x="537" y="375" width="1" height="224" fill="#808080"/>
<rect x="546" y="375" width="1" height="224" fill="#808080"/>
<rect x="554" y="375" width="1" height="224" fill="#808080"/>
<rect x="562" y="375" width="1" height="224" fill="#808080"/>
<rect x="570" y="375" width="1" height="224" fill="#808080"/>
<rect x="579" y="375" width="1" height="224" fill="#808080"/>
<rect x="587" y="375" width="1" height="224" fill="#808080"/>
<rect x="595" y="375" width="1" height="224" fill="#808080"/>
<rect x="603" y="375" width="1" height="224" fill="#808080"/>
<rect x="612" y="375" width="1" height="224" fill="#808080"/>
<rect x="620" y="375" width="1" height="224" fill="#808080"/>
<rect x="628" y="375" width="1" height="224" fill="#808080"/>
<rect x="636" y="375" width="1" height="224" fill="#808080"/>
<rect x="645" y="375" width="1" height="224" fill="#808080"/>
<rect x="653" y="375" width="1" height="224" fill="#808080"/>
<rect x="661" y="375" width="1" height="224" fill="#808080"/>
<rect x="669" y="375" width="1" height="224" fill="#808080"/>
<rect x="678" y="375" width="1" height="224" fill="#808080"/>
<rect x="686" y="375" width="1" height="224" fill="#808080"/>
<rect x="694" y="375" width="1" height="224" fill="#808080"/>
<rect x="702" y="375" width="1" height="224" fill="#808080"/>
<rect x="711" y="375" width="1" height="224" fill="#808080"/>
<rect x="719" y="375" width="1" height="224" fill="#808080"/>
<rect x="727" y="375" width="1" height="224" fill="#808080"/>
<rect x="735" y="375" width="1" height="224" fill="#808080"/>
<rect x="744" y="375" width="1" height="224" fill="#808080"/>
<rect x="752" y="375" width="1" height="224" fill="#808080"/>
<rect x="316" y="414" width="4" height="3" fill="#ffff00"/>
<rect x="316" y="434" width="4" height="3" fill="#ffff00"/>
<rect x="322" y="416" width="3" height="4" fill="#ffff00"/>
<rect x="322" y="424" width="3" height="4" fill="#ffff00"/>
<rect x="322" y="432" width="3" height="4" fill="#ffff00"/>
<rect x="314" y="420" width="3" height="4" fill="#ffff00"/>
<rect x="314" y="428" width="3" height="4" fill="#ffff00"/>
</svg><div class="a" style="left:760px;top:375px;width:4px;height:224px;background:#f7f7f7"></div>
<div class="a" style="left:120px;top:599px;width:640px;height:4px;background:linear-gradient(#fbfbfb,#f3f3f3)"></div>
<div class="a" style="left:764px;top:375px;width:15px;height:224px;background:linear-gradient(90deg,#e9e9e9,#eeeeee 30%,#f3f3f3 100%)"></div>
<div class="a" style="left:764px;top:375px;width:15px;height:17px;background:linear-gradient(90deg,#ededed,#f2f2f2 50%,#f4f4f4)"></div>
<div class="a" style="left:764px;top:580px;width:15px;height:19px;background:linear-gradient(90deg,#ededed,#f2f2f2 50%,#f4f4f4)"></div>
<div class="a" style="left:764px;top:392px;width:15px;height:188px;border:1px solid #979797;border-radius:2px;background:linear-gradient(90deg,#f4f4f4 0,#eaeaea 40%,#d4d4d6 55%,#c6c6ca 80%,#dcdcdc 100%);box-shadow:inset 0 0 0 1px rgba(255,255,255,.75)"></div>
<div class="a" style="left:768px;top:483px;width:7px;height:1px;background:linear-gradient(90deg,#3c3c3c,#9a9a9a)"></div>
<div class="a" style="left:768px;top:484px;width:7px;height:1px;background:#f8f8f8"></div>
<div class="a" style="left:768px;top:486px;width:7px;height:1px;background:linear-gradient(90deg,#3c3c3c,#9a9a9a)"></div>
<div class="a" style="left:768px;top:487px;width:7px;height:1px;background:#f8f8f8"></div>
<div class="a" style="left:768px;top:489px;width:7px;height:1px;background:linear-gradient(90deg,#3c3c3c,#9a9a9a)"></div>
<div class="a" style="left:768px;top:490px;width:7px;height:1px;background:#f8f8f8"></div>
<svg class="a" style="left:768px;top:381px" width="9" height="6" viewBox="0 0 9 6"><defs><linearGradient id="ga1" x1="0" y1="0" x2="0" y2="1"><stop offset="0" stop-color="#1a1a1a"/><stop offset="1" stop-color="#8a8a8a"/></linearGradient></defs><polygon points="4.5,0.8 8.2,5 0.8,5" fill="url(#ga1)"/></svg>
<svg class="a" style="left:768px;top:588px" width="9" height="6" viewBox="0 0 9 6"><defs><linearGradient id="ga2" x1="0" y1="0" x2="0" y2="1"><stop offset="0" stop-color="#2a2a2a"/><stop offset="1" stop-color="#8a8a8a"/></linearGradient></defs><polygon points="0.8,1 8.2,1 4.5,5.2" fill="url(#ga2)"/></svg>
<div class="a" style="left:120px;top:603px;width:640px;height:15px;background:linear-gradient(#e9e9e9,#eeeeee 30%,#f3f3f3 100%)"></div>
<div class="a" style="left:120px;top:603px;width:17px;height:15px;background:linear-gradient(#ebebeb,#e9e9e9)"></div>
<div class="a" style="left:743px;top:603px;width:17px;height:15px;background:linear-gradient(#f0f0f0,#f3f3f3)"></div>
<div class="a" style="left:152px;top:603px;width:15px;height:15px;border:1px solid #8e8e8e;border-radius:2px;background:linear-gradient(#f4f4f4 0,#eaeaea 40%,#d4d4d6 55%,#c6c6ca 80%,#dcdcdc 100%);box-shadow:inset 0 0 0 1px rgba(255,255,255,.75)"></div>
<svg class="a" style="left:125px;top:606px" width="6" height="9" viewBox="0 0 6 9"><defs><linearGradient id="ga3" x1="0" y1="0" x2="1" y2="0"><stop offset="0" stop-color="#1a1a1a"/><stop offset="1" stop-color="#6a6a6a"/></linearGradient></defs><polygon points="5.2,0.8 5.2,8.2 1,4.5" fill="url(#ga3)"/></svg>
<svg class="a" style="left:749px;top:606px" width="6" height="9" viewBox="0 0 6 9"><defs><linearGradient id="ga4" x1="0" y1="0" x2="1" y2="0"><stop offset="0" stop-color="#6a6a6a"/><stop offset="1" stop-color="#1a1a1a"/></linearGradient></defs><polygon points="0.8,0.8 0.8,8.2 5,4.5" fill="url(#ga4)"/></svg>
</div></body></html>
